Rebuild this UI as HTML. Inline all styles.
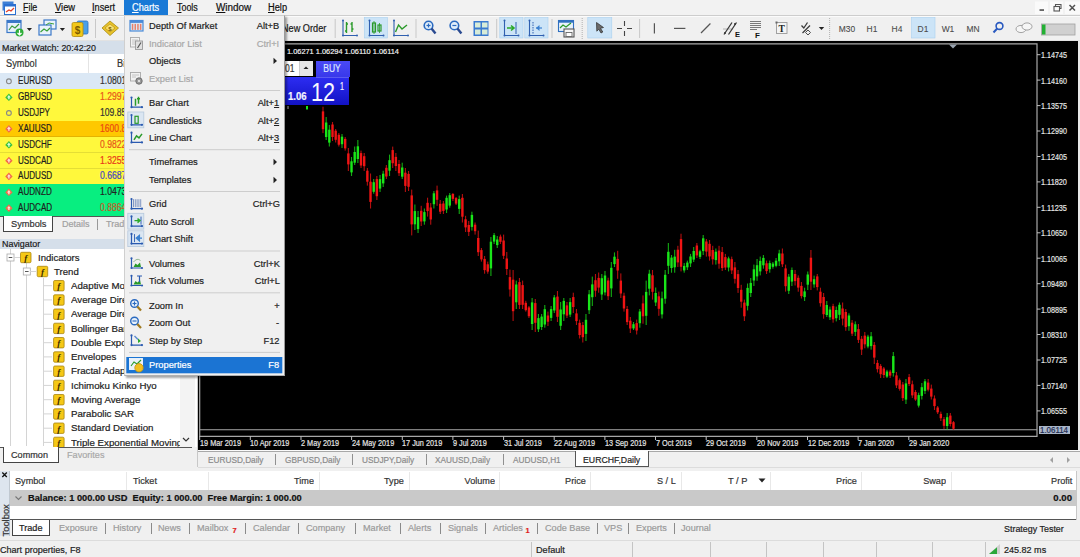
<!DOCTYPE html>
<html><head><meta charset="utf-8"><style>
html,body{margin:0;padding:0;width:1080px;height:557px;overflow:hidden;background:#f0f0f0}
.b{position:absolute}
.t{position:absolute;white-space:nowrap;font-family:'Liberation Sans',sans-serif;-webkit-text-stroke:0.2px currentColor}
u{text-decoration:underline;text-underline-offset:1px}
</style></head><body>
<div class="b" style="left:0px;top:0px;width:1080px;height:557px;background:#f0f0f0"></div><div class="b" style="left:0px;top:0px;width:1080px;height:15px;background:#f2f2f2"></div><svg class="b" style="left:2px;top:1px" width="14" height="14" viewBox="0 0 14 14"><rect x="0.5" y="0.5" width="11" height="9" fill="#3d7fd6"/><rect x="2.5" y="3.5" width="11" height="10" fill="#fff" stroke="#2a6fd0"/><rect x="2.5" y="3.5" width="11" height="2" fill="#2a6fd0"/><path d="M4 11 L7 9 L9 10 L12 7" stroke="#e0402a" stroke-width="1.3" fill="none"/></svg><div class="t" style="left:23.0px;top:2.0px;font-size:10px;line-height:12.0px;color:#111;font-weight:400;transform:scaleX(0.887);transform-origin:0 50%;"><u>F</u>ile</div><div class="t" style="left:54.6px;top:2.0px;font-size:10px;line-height:12.0px;color:#111;font-weight:400;transform:scaleX(0.935);transform-origin:0 50%;"><u>V</u>iew</div><div class="t" style="left:92.0px;top:2.0px;font-size:10px;line-height:12.0px;color:#111;font-weight:400;transform:scaleX(0.920);transform-origin:0 50%;"><u>I</u>nsert</div><div class="t" style="left:177.2px;top:2.0px;font-size:10px;line-height:12.0px;color:#111;font-weight:400;transform:scaleX(0.891);transform-origin:0 50%;"><u>T</u>ools</div><div class="t" style="left:215.8px;top:2.0px;font-size:10px;line-height:12.0px;color:#111;font-weight:400;transform:scaleX(0.990);transform-origin:0 50%;"><u>W</u>indow</div><div class="t" style="left:268.0px;top:2.0px;font-size:10px;line-height:12.0px;color:#111;font-weight:400;transform:scaleX(0.924);transform-origin:0 50%;"><u>H</u>elp</div><div class="b" style="left:123.9px;top:0px;width:44.1px;height:15px;background:#1979d6"></div><div class="t" style="left:132.4px;top:2.0px;font-size:10px;line-height:12.0px;color:#fff;font-weight:400;transform:scaleX(0.920);transform-origin:0 50%;"><u>C</u>harts</div><svg class="b" style="left:1030px;top:0px" width="50" height="15" viewBox="0 0 50 15"><rect x="5" y="1.5" width="13" height="12.5" fill="#fafafa"/><rect x="20" y="1.5" width="13" height="12.5" fill="#fafafa"/><rect x="35" y="1.5" width="15" height="12.5" fill="#fafafa"/><rect x="9.5" y="9.3" width="4.5" height="1.5" fill="#444"/><rect x="24" y="6.5" width="5.5" height="4.5" fill="none" stroke="#555" stroke-width="1.1"/><path d="M25.5 6 V4.5 H31 V8.5 H30" stroke="#555" stroke-width="1.1" fill="none"/><path d="M39.5 5 L45 10.5 M45 5 L39.5 10.5" stroke="#505050" stroke-width="1.5"/></svg><div class="b" style="left:0px;top:15px;width:1080px;height:1.2px;background:#cdcdcd"></div><div class="b" style="left:0px;top:16.2px;width:1080px;height:0.8px;background:#fbfbfb"></div><div class="b" style="left:0px;top:17px;width:1080px;height:24px;background:#f0f0f0"></div><div class="b" style="left:0px;top:40px;width:1080px;height:1px;background:#e2e2e2"></div><svg class="b" style="left:0;top:0" width="1080" height="45"><rect x="364.3" y="17.5" width="23.1" height="20.5" fill="#cce4f7" stroke="#a8d0f0" stroke-width="0.6"/><rect x="499.8" y="17.5" width="23.2" height="20.5" fill="#cce4f7" stroke="#a8d0f0" stroke-width="0.6"/><rect x="524.8" y="17.5" width="23.2" height="20.5" fill="#cce4f7" stroke="#a8d0f0" stroke-width="0.6"/><rect x="587.8" y="17.5" width="24.0" height="20.5" fill="#cce4f7" stroke="#a8d0f0" stroke-width="0.6"/><rect x="911.5" y="17.5" width="23.5" height="20.5" fill="#cce4f7" stroke="#a8d0f0" stroke-width="0.6"/><rect x="95.0" y="19" width="1" height="19" fill="#c8c8c8"/><rect x="334.7" y="19" width="1" height="19" fill="#c8c8c8"/><rect x="415.5" y="19" width="1" height="19" fill="#c8c8c8"/><rect x="496.2" y="19" width="1" height="19" fill="#c8c8c8"/><rect x="551.5" y="19" width="1" height="19" fill="#c8c8c8"/><rect x="639.1" y="19" width="1" height="19" fill="#c8c8c8"/><rect x="581.7" y="18" width="1" height="1" fill="#b0b0b0"/><rect x="581.7" y="20" width="1" height="1" fill="#b0b0b0"/><rect x="581.7" y="22" width="1" height="1" fill="#b0b0b0"/><rect x="581.7" y="24" width="1" height="1" fill="#b0b0b0"/><rect x="581.7" y="26" width="1" height="1" fill="#b0b0b0"/><rect x="581.7" y="28" width="1" height="1" fill="#b0b0b0"/><rect x="581.7" y="30" width="1" height="1" fill="#b0b0b0"/><rect x="581.7" y="32" width="1" height="1" fill="#b0b0b0"/><rect x="581.7" y="34" width="1" height="1" fill="#b0b0b0"/><rect x="581.7" y="36" width="1" height="1" fill="#b0b0b0"/><rect x="581.7" y="38" width="1" height="1" fill="#b0b0b0"/><rect x="829.1" y="18" width="1" height="1" fill="#b0b0b0"/><rect x="829.1" y="20" width="1" height="1" fill="#b0b0b0"/><rect x="829.1" y="22" width="1" height="1" fill="#b0b0b0"/><rect x="829.1" y="24" width="1" height="1" fill="#b0b0b0"/><rect x="829.1" y="26" width="1" height="1" fill="#b0b0b0"/><rect x="829.1" y="28" width="1" height="1" fill="#b0b0b0"/><rect x="829.1" y="30" width="1" height="1" fill="#b0b0b0"/><rect x="829.1" y="32" width="1" height="1" fill="#b0b0b0"/><rect x="829.1" y="34" width="1" height="1" fill="#b0b0b0"/><rect x="829.1" y="36" width="1" height="1" fill="#b0b0b0"/><rect x="829.1" y="38" width="1" height="1" fill="#b0b0b0"/><rect x="7" y="20.5" width="14" height="12" fill="#e8f0fa" stroke="#3b78c8" stroke-width="1.2"/><rect x="7" y="20.5" width="14" height="2.5" fill="#3b78c8"/><path d="M9 30 L12 26 L15 28 L19 24" stroke="#3a9a3a" stroke-width="1.2" fill="none"/><circle cx="19.5" cy="32.5" r="4" fill="#2fae3a"/><path d="M19.5 30 V35 M17.5 33 L19.5 35 L21.5 33" stroke="#fff" stroke-width="1.2" fill="none"/><path d="M26.8 28 L32 28 L29.4 31 Z" fill="#222"/><rect x="44" y="20" width="12" height="9" fill="#eaf2fb" stroke="#3b78c8" stroke-width="1.2"/><rect x="39" y="25" width="12" height="10" fill="#eaf2fb" stroke="#3b78c8" stroke-width="1.2"/><path d="M40.5 32 L44 29 L47 31 L50 28" stroke="#3aa03a" stroke-width="1.2" fill="none"/><path d="M46 25 L49 23 L54 24" stroke="#3aa03a" stroke-width="1" fill="none"/><path d="M59.8 28 L65 28 L62.4 31 Z" fill="#222"/><rect x="77" y="21" width="11" height="13" rx="1.5" fill="#4aa0e8" stroke="#2a70c0" stroke-width="0.8"/><rect x="72" y="22.5" width="11" height="14" rx="1.5" fill="#f2c81a" stroke="#b08a10" stroke-width="0.8"/><text x="77.5" y="34" font-size="10" font-weight="700" text-anchor="middle" fill="#7a5a00" font-family="Liberation Sans">$</text><path d="M102 28 L110 21 L118.5 28 L110 35.5 Z" fill="#e8c22a" stroke="#a88a10" stroke-width="0.8"/><path d="M105 28 L110 24 L115 28 L110 32 Z" fill="#f8e070" stroke="#b08a10" stroke-width="0.6"/><text x="110" y="31" font-size="6" font-weight="700" text-anchor="middle" fill="#7a5a00" font-family="Liberation Sans">$</text><path d="M343 20.5 V35.5 H357" stroke="#3060b0" stroke-width="1.1" fill="none"/><circle cx="343" cy="20.5" r="1" fill="#3060b0"/><circle cx="357" cy="35.5" r="1" fill="#3060b0"/><circle cx="343" cy="35.5" r="1" fill="#3060b0"/><path d="M346.5 22 V33 M345 31 H346.5 M346.5 24 H348 M352 22 V32 M350.5 24 H352 M352 29 H353.5" stroke="#2a9a2a" stroke-width="1.4" fill="none"/><path d="M369.5 20.5 V35.5 H383.5" stroke="#3060b0" stroke-width="1.1" fill="none"/><circle cx="369.5" cy="20.5" r="1" fill="#3060b0"/><circle cx="383.5" cy="35.5" r="1" fill="#3060b0"/><circle cx="369.5" cy="35.5" r="1" fill="#3060b0"/><rect x="372.5" y="23" width="3" height="9" fill="none" stroke="#2a9a2a" stroke-width="1.2"/><rect x="378" y="25" width="3" height="6" fill="none" stroke="#2a9a2a" stroke-width="1.2"/><path d="M374 21 V34 M379.5 23 V33" stroke="#2a9a2a" stroke-width="0.8"/><path d="M394 20.5 V35.5 H408" stroke="#3060b0" stroke-width="1.1" fill="none"/><circle cx="394" cy="20.5" r="1" fill="#3060b0"/><circle cx="408" cy="35.5" r="1" fill="#3060b0"/><circle cx="394" cy="35.5" r="1" fill="#3060b0"/><path d="M395.5 32 L398.5 25 L402 29 L407 25" stroke="#2a9a2a" stroke-width="1.4" fill="none"/><circle cx="428.5" cy="25.5" r="4.3" fill="#e0eefa" stroke="#2a6ac0" stroke-width="1.6"/><path d="M431.5 28.5 L435.5 33.5" stroke="#2a4a90" stroke-width="2.4"/><path d="M426.5 25.5 H430.5" stroke="#2a6ac0" stroke-width="1.2"/><path d="M428.5 23.5 V27.5" stroke="#2a6ac0" stroke-width="1.2"/><circle cx="454.4" cy="25.5" r="4.3" fill="#e0eefa" stroke="#2a6ac0" stroke-width="1.6"/><path d="M457.4 28.5 L461.4 33.5" stroke="#2a4a90" stroke-width="2.4"/><path d="M452.4 25.5 H456.4" stroke="#2a6ac0" stroke-width="1.2"/><rect x="473.5" y="21" width="15" height="15" fill="#3a7ad0"/><rect x="475" y="22.5" width="5.5" height="5" fill="#d8ecd8"/><rect x="482" y="22.5" width="5.5" height="5" fill="#d8ecd8"/><rect x="475" y="29.5" width="5.5" height="5" fill="#d8ecd8"/><rect x="482" y="29.5" width="5.5" height="5" fill="#d8ecd8"/><path d="M504.5 20.5 V35.5 H518.5" stroke="#3060b0" stroke-width="1.1" fill="none"/><circle cx="504.5" cy="20.5" r="1" fill="#3060b0"/><circle cx="518.5" cy="35.5" r="1" fill="#3060b0"/><circle cx="504.5" cy="35.5" r="1" fill="#3060b0"/><path d="M516 22 V34" stroke="#3060b0" stroke-width="1" /><path d="M507 28 H514 M511 25.5 L514 28 L511 30.5" stroke="#2aaa2a" stroke-width="1.6" fill="none"/><path d="M529.5 20.5 V35.5 H543.5" stroke="#3060b0" stroke-width="1.1" fill="none"/><circle cx="529.5" cy="20.5" r="1" fill="#3060b0"/><circle cx="543.5" cy="35.5" r="1" fill="#3060b0"/><circle cx="529.5" cy="35.5" r="1" fill="#3060b0"/><path d="M533 22 V34" stroke="#3060b0" stroke-width="1" stroke-dasharray="1.5 1"/><path d="M536 28 H542" stroke="#3a80d0" stroke-width="1.2"/><path d="M536 28 L539.5 25 V31 Z" fill="#3a80d0"/><rect x="558.5" y="20.5" width="15" height="11" fill="#e8f2fb" stroke="#3070c0" stroke-width="1.1"/><rect x="558.5" y="20.5" width="15" height="2.2" fill="#3070c0"/><path d="M560 28 L563 25 L566 27 L571 23" stroke="#2a9a2a" stroke-width="1.2" fill="none"/><rect x="564" y="29" width="10" height="8" fill="#f6f6f6" stroke="#555" stroke-width="1.1"/><rect x="566" y="32.5" width="6" height="4" fill="#fff" stroke="#555" stroke-width="0.8"/><path d="M596.5 22.5 L603.5 27.5 L600.5 28.3 L602.8 32 L601 33 L598.8 29.3 L596.8 31.2 Z" fill="#6a6a6a" stroke="#2a2a2a" stroke-width="0.7"/><path d="M617 28.5 H622 M627 28.5 H632 M624.5 21 V26 M624.5 31 V36" stroke="#444" stroke-width="1.1"/><path d="M654.4 23.3 V33.4" stroke="#555" stroke-width="1.2"/><path d="M674 28.4 H685.4" stroke="#555" stroke-width="1.2"/><path d="M701 33 L710.4 23.5" stroke="#555" stroke-width="1.2"/><path d="M724 34.5 L732 22.5 M728.5 34.5 L736.5 22.5" stroke="#3a3a3a" stroke-width="1.3" fill="none"/><path d="M723.5 29 L733 29" stroke="#555" stroke-width="0.8" stroke-dasharray="1 1"/><circle cx="725" cy="33" r="1" fill="#333"/><circle cx="735" cy="24" r="1" fill="#333"/><text x="737.5" y="37" font-size="7.5" font-weight="700" fill="#111" font-family="Liberation Sans" text-anchor="middle">E</text><path d="M750 21.5 H761 M750 23.5 H761 M750 25.5 H761 M750 27.5 H761 M750 29.5 H757" stroke="#6a6a6a" stroke-width="0.9"/><text x="757.5" y="37.5" font-size="8" font-weight="700" fill="#111" font-family="Liberation Sans" text-anchor="middle">F</text><rect x="776.5" y="22.5" width="10.5" height="11" fill="#f4f4f4" stroke="#999" stroke-width="0.9"/><rect x="775.5" y="21.5" width="2" height="2" fill="#666"/><text x="781.7" y="32" font-size="9.5" font-weight="700" fill="#222" font-family="Liberation Serif" text-anchor="middle">T</text><path d="M801.5 25.5 L803.8 28 L807.5 22.5" stroke="#3a3a3a" stroke-width="1.3" fill="none"/><path d="M802.5 33 L810 25.5" stroke="#3a3a3a" stroke-width="1.2"/><path d="M808 30 L810.5 32.5 L808 35 L805.5 32.5 Z" fill="none" stroke="#3a3a3a" stroke-width="0.9"/><path d="M818.8 27 L824.2 27 L821.5 30 Z" fill="#222"/><circle cx="999.5" cy="26" r="3.4" fill="none" stroke="#2a5ac0" stroke-width="1.6"/><path d="M997.2 28.5 L993.5 32.5" stroke="#2a5ac0" stroke-width="2"/><ellipse cx="1021" cy="29" rx="5" ry="3.6" fill="#f6f6f6" stroke="#999" stroke-width="0.9"/><ellipse cx="1027" cy="26.5" rx="5" ry="3.6" fill="#f6f6f6" stroke="#999" stroke-width="0.9"/><rect x="1041.5" y="24" width="33.5" height="11" fill="#d0d0d0" stroke="#a0a0a0" stroke-width="0.8"/><rect x="1042" y="24.5" width="3.5" height="10" fill="#22b033"/></svg><div class="t" style="left:796.5px;width:100px;text-align:center;top:22.9px;font-size:9.8px;line-height:11.8px;color:#4a4a4a;font-weight:400;transform:scaleX(0.860);transform-origin:50% 50%;-webkit-text-stroke:0.1px currentColor">M30</div><div class="t" style="left:822.0px;width:100px;text-align:center;top:22.9px;font-size:9.8px;line-height:11.8px;color:#4a4a4a;font-weight:400;transform:scaleX(0.860);transform-origin:50% 50%;-webkit-text-stroke:0.1px currentColor">H1</div><div class="t" style="left:846.7px;width:100px;text-align:center;top:22.9px;font-size:9.8px;line-height:11.8px;color:#4a4a4a;font-weight:400;transform:scaleX(0.860);transform-origin:50% 50%;-webkit-text-stroke:0.1px currentColor">H4</div><div class="t" style="left:873.0px;width:100px;text-align:center;top:22.9px;font-size:9.8px;line-height:11.8px;color:#4a4a4a;font-weight:400;transform:scaleX(0.860);transform-origin:50% 50%;-webkit-text-stroke:0.1px currentColor">D1</div><div class="t" style="left:897.6px;width:100px;text-align:center;top:22.9px;font-size:9.8px;line-height:11.8px;color:#4a4a4a;font-weight:400;transform:scaleX(0.860);transform-origin:50% 50%;-webkit-text-stroke:0.1px currentColor">W1</div><div class="t" style="left:923.0px;width:100px;text-align:center;top:22.9px;font-size:9.8px;line-height:11.8px;color:#4a4a4a;font-weight:400;transform:scaleX(0.860);transform-origin:50% 50%;-webkit-text-stroke:0.1px currentColor">MN</div><div class="t" style="left:282.0px;top:22.8px;font-size:10px;line-height:12.0px;color:#1a1a1a;font-weight:400;transform:scaleX(0.916);transform-origin:0 50%;">New Order</div><div class="b" style="left:0px;top:41px;width:197px;height:13px;background:#d5dfea"></div><div class="t" style="left:2.0px;top:41.8px;font-size:9.6px;line-height:11.5px;color:#1a1a1a;font-weight:400;transform:scaleX(0.926);transform-origin:0 50%;">Market Watch: 20:42:20</div><div class="b" style="left:0px;top:54px;width:197px;height:19.4px;background:#fff"></div><div class="b" style="left:88.3px;top:54px;width:1px;height:162px;background:#e4e4e4"></div><div class="t" style="left:5.5px;top:57.8px;font-size:10px;line-height:12.0px;color:#333;font-weight:400;transform:scaleX(0.920);transform-origin:0 50%;">Symbol</div><div class="t" style="left:117.0px;top:57.8px;font-size:10px;line-height:12.0px;color:#333;font-weight:400;transform:scaleX(0.920);transform-origin:0 50%;">Bid</div><div class="b" style="left:0px;top:73.4px;width:197px;height:15.85px;background:#dbe8f5"></div><div class="b" style="left:0px;top:88.8px;width:197px;height:0.5px;background:rgba(0,0,0,0.10)"></div><div class="t" style="left:17.5px;top:75.3px;font-size:10px;line-height:12.0px;color:#1e1e1e;font-weight:400;transform:scaleX(0.810);transform-origin:0 50%;">EURUSD</div><div class="t" style="left:100.0px;top:75.3px;font-size:10px;line-height:12.0px;color:#333;font-weight:400;transform:scaleX(0.860);transform-origin:0 50%;">1.08017</div><div class="b" style="left:0px;top:89.2px;width:197px;height:15.85px;background:#fff83c"></div><div class="b" style="left:0px;top:104.6px;width:197px;height:0.5px;background:rgba(0,0,0,0.10)"></div><div class="t" style="left:17.5px;top:91.2px;font-size:10px;line-height:12.0px;color:#1e1e1e;font-weight:400;transform:scaleX(0.810);transform-origin:0 50%;">GBPUSD</div><div class="t" style="left:100.0px;top:91.2px;font-size:10px;line-height:12.0px;color:#e8541a;font-weight:400;transform:scaleX(0.860);transform-origin:0 50%;">1.29972</div><div class="b" style="left:0px;top:105.1px;width:197px;height:15.85px;background:#fff83c"></div><div class="b" style="left:0px;top:120.5px;width:197px;height:0.5px;background:rgba(0,0,0,0.10)"></div><div class="t" style="left:17.5px;top:107.0px;font-size:10px;line-height:12.0px;color:#1e1e1e;font-weight:400;transform:scaleX(0.810);transform-origin:0 50%;">USDJPY</div><div class="t" style="left:100.0px;top:107.0px;font-size:10px;line-height:12.0px;color:#333;font-weight:400;transform:scaleX(0.860);transform-origin:0 50%;">109.853</div><div class="b" style="left:0px;top:121.0px;width:197px;height:15.85px;background:#fec800"></div><div class="b" style="left:0px;top:136.3px;width:197px;height:0.5px;background:rgba(0,0,0,0.10)"></div><div class="t" style="left:17.5px;top:122.8px;font-size:10px;line-height:12.0px;color:#1e1e1e;font-weight:400;transform:scaleX(0.810);transform-origin:0 50%;">XAUUSD</div><div class="t" style="left:100.0px;top:122.8px;font-size:10px;line-height:12.0px;color:#ec4a10;font-weight:400;transform:scaleX(0.860);transform-origin:0 50%;">1600.85</div><div class="b" style="left:0px;top:136.8px;width:197px;height:15.85px;background:#fff83c"></div><div class="b" style="left:0px;top:152.2px;width:197px;height:0.5px;background:rgba(0,0,0,0.10)"></div><div class="t" style="left:17.5px;top:138.7px;font-size:10px;line-height:12.0px;color:#1e1e1e;font-weight:400;transform:scaleX(0.810);transform-origin:0 50%;">USDCHF</div><div class="t" style="left:100.0px;top:138.7px;font-size:10px;line-height:12.0px;color:#e8541a;font-weight:400;transform:scaleX(0.860);transform-origin:0 50%;">0.98227</div><div class="b" style="left:0px;top:152.7px;width:197px;height:15.85px;background:#fff83c"></div><div class="b" style="left:0px;top:168.0px;width:197px;height:0.5px;background:rgba(0,0,0,0.10)"></div><div class="t" style="left:17.5px;top:154.6px;font-size:10px;line-height:12.0px;color:#1e1e1e;font-weight:400;transform:scaleX(0.810);transform-origin:0 50%;">USDCAD</div><div class="t" style="left:100.0px;top:154.6px;font-size:10px;line-height:12.0px;color:#e83a1a;font-weight:400;transform:scaleX(0.860);transform-origin:0 50%;">1.32559</div><div class="b" style="left:0px;top:168.5px;width:197px;height:15.85px;background:#fff83c"></div><div class="b" style="left:0px;top:183.8px;width:197px;height:0.5px;background:rgba(0,0,0,0.10)"></div><div class="t" style="left:17.5px;top:170.4px;font-size:10px;line-height:12.0px;color:#1e1e1e;font-weight:400;transform:scaleX(0.810);transform-origin:0 50%;">AUDUSD</div><div class="t" style="left:100.0px;top:170.4px;font-size:10px;line-height:12.0px;color:#4646c0;font-weight:400;transform:scaleX(0.860);transform-origin:0 50%;">0.66871</div><div class="b" style="left:0px;top:184.4px;width:197px;height:15.85px;background:#08ee80"></div><div class="b" style="left:0px;top:199.7px;width:197px;height:0.5px;background:rgba(0,0,0,0.10)"></div><div class="t" style="left:17.5px;top:186.3px;font-size:10px;line-height:12.0px;color:#1e1e1e;font-weight:400;transform:scaleX(0.810);transform-origin:0 50%;">AUDNZD</div><div class="t" style="left:100.0px;top:186.3px;font-size:10px;line-height:12.0px;color:#222;font-weight:400;transform:scaleX(0.860);transform-origin:0 50%;">1.04733</div><div class="b" style="left:0px;top:200.2px;width:197px;height:15.85px;background:#08ee80"></div><div class="b" style="left:0px;top:215.5px;width:197px;height:0.5px;background:rgba(0,0,0,0.10)"></div><div class="t" style="left:17.5px;top:202.1px;font-size:10px;line-height:12.0px;color:#1e1e1e;font-weight:400;transform:scaleX(0.810);transform-origin:0 50%;">AUDCAD</div><div class="t" style="left:100.0px;top:202.1px;font-size:10px;line-height:12.0px;color:#c85a2a;font-weight:400;transform:scaleX(0.860);transform-origin:0 50%;">0.88645</div><svg class="b" style="left:0;top:0" width="20" height="220"><circle cx="8.9" cy="81.3" r="2.4" fill="none" stroke="#888" stroke-width="1.1"/><path d="M8.9 93.4 L12.6 97.4 L8.9 101.0 L5.2 97.4 Z" fill="#3cc040"/><path d="M8.9 95.0 L10.8 97.4 L9.6 97.4 V99.2 H8.2 V97.4 H7 Z" fill="#d8ffd8"/><circle cx="8.9" cy="113.0" r="2.4" fill="none" stroke="#888" stroke-width="1.1"/><path d="M8.9 125.0 L12.6 129.0 L8.9 132.7 L5.2 129.0 Z" fill="#f26a4a"/><path d="M8.9 126.6 L10.8 129.0 L9.6 129.0 V130.8 H8.2 V129.0 H7 Z" fill="#ffe0d8"/><path d="M8.9 140.9 L12.6 144.9 L8.9 148.5 L5.2 144.9 Z" fill="#3cc040"/><path d="M8.9 142.5 L10.8 144.9 L9.6 144.9 V146.7 H8.2 V144.9 H7 Z" fill="#d8ffd8"/><path d="M8.9 156.8 L12.6 160.8 L8.9 164.4 L5.2 160.8 Z" fill="#f26a4a"/><path d="M8.9 158.4 L10.8 160.8 L9.6 160.8 V162.6 H8.2 V160.8 H7 Z" fill="#ffe0d8"/><path d="M8.9 172.6 L12.6 176.6 L8.9 180.2 L5.2 176.6 Z" fill="#f26a4a"/><path d="M8.9 174.2 L10.8 176.6 L9.6 176.6 V178.4 H8.2 V176.6 H7 Z" fill="#ffe0d8"/><path d="M8.9 188.5 L12.6 192.5 L8.9 196.1 L5.2 192.5 Z" fill="#f26a4a"/><path d="M8.9 190.1 L10.8 192.5 L9.6 192.5 V194.3 H8.2 V192.5 H7 Z" fill="#ffe0d8"/><path d="M8.9 204.3 L12.6 208.3 L8.9 211.9 L5.2 208.3 Z" fill="#f26a4a"/><path d="M8.9 205.9 L10.8 208.3 L9.6 208.3 V210.1 H8.2 V208.3 H7 Z" fill="#ffe0d8"/></svg><div class="b" style="left:0px;top:215.5px;width:197px;height:17.5px;background:#f0f0f0"></div><div class="b" style="left:0px;top:215.5px;width:197px;height:0.8px;background:#555"></div><div class="b" style="left:2.5px;top:216.3px;width:50.8px;height:16px;background:#fff;border:1px solid #444;border-top:none;box-sizing:border-box"></div><div class="t" style="left:10.5px;top:218.4px;font-size:9.8px;line-height:11.8px;color:#333;font-weight:400;transform:scaleX(0.945);transform-origin:0 50%;">Symbols</div><div class="t" style="left:62.0px;top:218.4px;font-size:9.8px;line-height:11.8px;color:#a0a0a0;font-weight:400;transform:scaleX(0.921);transform-origin:0 50%;">Details</div><div class="b" style="left:97.2px;top:218.5px;width:1px;height:11px;background:#999"></div><div class="t" style="left:105.8px;top:218.4px;font-size:9.8px;line-height:11.8px;color:#a0a0a0;font-weight:400;transform:scaleX(0.930);transform-origin:0 50%;">Trading</div><div class="b" style="left:0px;top:233px;width:197px;height:6px;background:#f0f0f0"></div><div class="b" style="left:0px;top:238.8px;width:197px;height:10.2px;background:#d5dfea"></div><div class="t" style="left:2.0px;top:238.2px;font-size:9.6px;line-height:11.5px;color:#1a1a1a;font-weight:400;transform:scaleX(0.930);transform-origin:0 50%;">Navigator</div><div class="b" style="left:0px;top:249px;width:197px;height:197.5px;background:#fff"></div><div class="b" style="left:180px;top:249px;width:15px;height:197.5px;background:#f3f3f3"></div><div class="t" style="left:37.7px;top:251.6px;font-size:9.8px;line-height:11.8px;color:#222;font-weight:400;transform:scaleX(0.979);transform-origin:0 50%;">Indicators</div><div class="t" style="left:53.8px;top:265.6px;font-size:9.8px;line-height:11.8px;color:#222;font-weight:400;transform:scaleX(0.980);transform-origin:0 50%;">Trend</div><div class="t" style="left:71.0px;top:279.8px;font-size:9.8px;line-height:11.8px;color:#222;font-weight:400;transform:scaleX(0.990);transform-origin:0 50%;width:110px;overflow:hidden">Adaptive Moving Average</div><div class="t" style="left:71.0px;top:294.1px;font-size:9.8px;line-height:11.8px;color:#222;font-weight:400;transform:scaleX(0.990);transform-origin:0 50%;width:110px;overflow:hidden">Average Directional Movement Index</div><div class="t" style="left:71.0px;top:308.3px;font-size:9.8px;line-height:11.8px;color:#222;font-weight:400;transform:scaleX(0.990);transform-origin:0 50%;width:110px;overflow:hidden">Average Directional Movement Index Wilder</div><div class="t" style="left:71.0px;top:322.6px;font-size:9.8px;line-height:11.8px;color:#222;font-weight:400;transform:scaleX(0.990);transform-origin:0 50%;width:110px;overflow:hidden">Bollinger Bands</div><div class="t" style="left:71.0px;top:336.8px;font-size:9.8px;line-height:11.8px;color:#222;font-weight:400;transform:scaleX(0.990);transform-origin:0 50%;width:110px;overflow:hidden">Double Exponential Moving Average</div><div class="t" style="left:71.0px;top:351.1px;font-size:9.8px;line-height:11.8px;color:#222;font-weight:400;transform:scaleX(0.990);transform-origin:0 50%;width:110px;overflow:hidden">Envelopes</div><div class="t" style="left:71.0px;top:365.3px;font-size:9.8px;line-height:11.8px;color:#222;font-weight:400;transform:scaleX(0.990);transform-origin:0 50%;width:110px;overflow:hidden">Fractal Adaptive Moving Average</div><div class="t" style="left:71.0px;top:379.6px;font-size:9.8px;line-height:11.8px;color:#222;font-weight:400;transform:scaleX(0.990);transform-origin:0 50%;width:110px;overflow:hidden">Ichimoku Kinko Hyo</div><div class="t" style="left:71.0px;top:393.8px;font-size:9.8px;line-height:11.8px;color:#222;font-weight:400;transform:scaleX(0.990);transform-origin:0 50%;width:110px;overflow:hidden">Moving Average</div><div class="t" style="left:71.0px;top:408.1px;font-size:9.8px;line-height:11.8px;color:#222;font-weight:400;transform:scaleX(0.990);transform-origin:0 50%;width:110px;overflow:hidden">Parabolic SAR</div><div class="t" style="left:71.0px;top:422.3px;font-size:9.8px;line-height:11.8px;color:#222;font-weight:400;transform:scaleX(0.990);transform-origin:0 50%;width:110px;overflow:hidden">Standard Deviation</div><div class="t" style="left:71.0px;top:436.6px;font-size:9.8px;line-height:11.8px;color:#222;font-weight:400;transform:scaleX(0.990);transform-origin:0 50%;width:110px;overflow:hidden">Triple Exponential Moving Average</div><svg class="b" style="left:0;top:0" width="200" height="460"><path d="M10.5 249 V446 M26.5 262 V446 M43.5 278 V446" stroke="#d4d4d4" stroke-width="1" fill="none"/><rect x="7.0" y="254.0" width="7" height="7" fill="#fff" stroke="#aaa" stroke-width="0.8"/><path d="M8.7 257.5 H12.3" stroke="#444" stroke-width="0.9"/><path d="M14 257.5 H20" stroke="#d4d4d4" stroke-width="1"/><rect x="20.5" y="252.3" width="10.5" height="10.4" rx="1.2" fill="#f5c816" stroke="#a88410" stroke-width="0.8"/><text x="25.7" y="260.8" font-size="9" font-style="italic" font-weight="700" fill="#3a2a00" text-anchor="middle" font-family="Liberation Serif">f</text><rect x="23.3" y="268.0" width="7" height="7" fill="#fff" stroke="#aaa" stroke-width="0.8"/><path d="M25.0 271.5 H28.6" stroke="#444" stroke-width="0.9"/><path d="M30 271.5 H36" stroke="#d4d4d4" stroke-width="1"/><rect x="37.2" y="266.3" width="10.5" height="10.4" rx="1.2" fill="#f5c816" stroke="#a88410" stroke-width="0.8"/><text x="42.400000000000006" y="274.8" font-size="9" font-style="italic" font-weight="700" fill="#3a2a00" text-anchor="middle" font-family="Liberation Serif">f</text><path d="M44 285.7 H52" stroke="#d4d4d4" stroke-width="1"/><rect x="53.6" y="280.5" width="10.5" height="10.4" rx="1.2" fill="#f5c816" stroke="#a88410" stroke-width="0.8"/><text x="58.800000000000004" y="289.0" font-size="9" font-style="italic" font-weight="700" fill="#3a2a00" text-anchor="middle" font-family="Liberation Serif">f</text><path d="M44 299.9 H52" stroke="#d4d4d4" stroke-width="1"/><rect x="53.6" y="294.8" width="10.5" height="10.4" rx="1.2" fill="#f5c816" stroke="#a88410" stroke-width="0.8"/><text x="58.800000000000004" y="303.2" font-size="9" font-style="italic" font-weight="700" fill="#3a2a00" text-anchor="middle" font-family="Liberation Serif">f</text><path d="M44 314.2 H52" stroke="#d4d4d4" stroke-width="1"/><rect x="53.6" y="309.0" width="10.5" height="10.4" rx="1.2" fill="#f5c816" stroke="#a88410" stroke-width="0.8"/><text x="58.800000000000004" y="317.5" font-size="9" font-style="italic" font-weight="700" fill="#3a2a00" text-anchor="middle" font-family="Liberation Serif">f</text><path d="M44 328.4 H52" stroke="#d4d4d4" stroke-width="1"/><rect x="53.6" y="323.2" width="10.5" height="10.4" rx="1.2" fill="#f5c816" stroke="#a88410" stroke-width="0.8"/><text x="58.800000000000004" y="331.8" font-size="9" font-style="italic" font-weight="700" fill="#3a2a00" text-anchor="middle" font-family="Liberation Serif">f</text><path d="M44 342.7 H52" stroke="#d4d4d4" stroke-width="1"/><rect x="53.6" y="337.5" width="10.5" height="10.4" rx="1.2" fill="#f5c816" stroke="#a88410" stroke-width="0.8"/><text x="58.800000000000004" y="346.0" font-size="9" font-style="italic" font-weight="700" fill="#3a2a00" text-anchor="middle" font-family="Liberation Serif">f</text><path d="M44 356.9 H52" stroke="#d4d4d4" stroke-width="1"/><rect x="53.6" y="351.8" width="10.5" height="10.4" rx="1.2" fill="#f5c816" stroke="#a88410" stroke-width="0.8"/><text x="58.800000000000004" y="360.2" font-size="9" font-style="italic" font-weight="700" fill="#3a2a00" text-anchor="middle" font-family="Liberation Serif">f</text><path d="M44 371.2 H52" stroke="#d4d4d4" stroke-width="1"/><rect x="53.6" y="366.0" width="10.5" height="10.4" rx="1.2" fill="#f5c816" stroke="#a88410" stroke-width="0.8"/><text x="58.800000000000004" y="374.5" font-size="9" font-style="italic" font-weight="700" fill="#3a2a00" text-anchor="middle" font-family="Liberation Serif">f</text><path d="M44 385.4 H52" stroke="#d4d4d4" stroke-width="1"/><rect x="53.6" y="380.2" width="10.5" height="10.4" rx="1.2" fill="#f5c816" stroke="#a88410" stroke-width="0.8"/><text x="58.800000000000004" y="388.8" font-size="9" font-style="italic" font-weight="700" fill="#3a2a00" text-anchor="middle" font-family="Liberation Serif">f</text><path d="M44 399.7 H52" stroke="#d4d4d4" stroke-width="1"/><rect x="53.6" y="394.5" width="10.5" height="10.4" rx="1.2" fill="#f5c816" stroke="#a88410" stroke-width="0.8"/><text x="58.800000000000004" y="403.0" font-size="9" font-style="italic" font-weight="700" fill="#3a2a00" text-anchor="middle" font-family="Liberation Serif">f</text><path d="M44 413.9 H52" stroke="#d4d4d4" stroke-width="1"/><rect x="53.6" y="408.8" width="10.5" height="10.4" rx="1.2" fill="#f5c816" stroke="#a88410" stroke-width="0.8"/><text x="58.800000000000004" y="417.2" font-size="9" font-style="italic" font-weight="700" fill="#3a2a00" text-anchor="middle" font-family="Liberation Serif">f</text><path d="M44 428.2 H52" stroke="#d4d4d4" stroke-width="1"/><rect x="53.6" y="423.0" width="10.5" height="10.4" rx="1.2" fill="#f5c816" stroke="#a88410" stroke-width="0.8"/><text x="58.800000000000004" y="431.5" font-size="9" font-style="italic" font-weight="700" fill="#3a2a00" text-anchor="middle" font-family="Liberation Serif">f</text><path d="M44 442.4 H52" stroke="#d4d4d4" stroke-width="1"/><rect x="53.6" y="437.2" width="10.5" height="10.4" rx="1.2" fill="#f5c816" stroke="#a88410" stroke-width="0.8"/><text x="58.800000000000004" y="445.8" font-size="9" font-style="italic" font-weight="700" fill="#3a2a00" text-anchor="middle" font-family="Liberation Serif">f</text></svg><svg class="b" style="left:181px;top:436px" width="10" height="8"><path d="M2 2 L5 5 L8 2" stroke="#333" stroke-width="1.2" fill="none"/></svg><div class="b" style="left:0px;top:446.5px;width:192px;height:1px;background:#555"></div><div class="b" style="left:0px;top:447px;width:197px;height:16px;background:#f0f0f0"></div><div class="b" style="left:0px;top:446.5px;width:192px;height:1px;background:#555"></div><div class="b" style="left:2.5px;top:446.5px;width:56px;height:16px;background:#fff;border:1px solid #444;border-top:none;box-sizing:border-box"></div><div class="t" style="left:10.5px;top:448.9px;font-size:9.8px;line-height:11.8px;color:#333;font-weight:400;transform:scaleX(0.930);transform-origin:0 50%;">Common</div><div class="t" style="left:66.5px;top:448.9px;font-size:9.8px;line-height:11.8px;color:#a8a8a8;font-weight:400;transform:scaleX(0.930);transform-origin:0 50%;">Favorites</div><div class="b" style="left:196.7px;top:41px;width:1.3px;height:426px;background:#c8c8c8"></div><div class="b" style="left:197.5px;top:41px;width:880.5px;height:409px;background:#000"></div><div class="b" style="left:1078px;top:41px;width:2px;height:426px;background:#e8e8e8"></div><svg class="b" style="left:0;top:0" width="1080" height="452"><path d="M199.7 436.3 V43.9 H1037 V436.3 Z" stroke="#a8a8a8" stroke-width="1.2" fill="none"/><path d="M199.7 429.8 H1037" stroke="#a8a8a8" stroke-width="1.1"/><path d="M949 44.5 L957 44.5 L953 48.5 Z" fill="#9aa4b0"/><path d="M1037 54.7 H1040.5" stroke="#c0c0c0" stroke-width="1"/><path d="M1037 80.1 H1040.5" stroke="#c0c0c0" stroke-width="1"/><path d="M1037 105.6 H1040.5" stroke="#c0c0c0" stroke-width="1"/><path d="M1037 131.0 H1040.5" stroke="#c0c0c0" stroke-width="1"/><path d="M1037 156.5 H1040.5" stroke="#c0c0c0" stroke-width="1"/><path d="M1037 181.9 H1040.5" stroke="#c0c0c0" stroke-width="1"/><path d="M1037 207.3 H1040.5" stroke="#c0c0c0" stroke-width="1"/><path d="M1037 232.8 H1040.5" stroke="#c0c0c0" stroke-width="1"/><path d="M1037 258.2 H1040.5" stroke="#c0c0c0" stroke-width="1"/><path d="M1037 283.7 H1040.5" stroke="#c0c0c0" stroke-width="1"/><path d="M1037 309.1 H1040.5" stroke="#c0c0c0" stroke-width="1"/><path d="M1037 334.5 H1040.5" stroke="#c0c0c0" stroke-width="1"/><path d="M1037 360.0 H1040.5" stroke="#c0c0c0" stroke-width="1"/><path d="M1037 385.4 H1040.5" stroke="#c0c0c0" stroke-width="1"/><path d="M1037 410.9 H1040.5" stroke="#c0c0c0" stroke-width="1"/><path d="M199.7 436.3 V440" stroke="#c0c0c0" stroke-width="1"/><path d="M250.3 436.3 V440" stroke="#c0c0c0" stroke-width="1"/><path d="M301.0 436.3 V440" stroke="#c0c0c0" stroke-width="1"/><path d="M351.6 436.3 V440" stroke="#c0c0c0" stroke-width="1"/><path d="M402.3 436.3 V440" stroke="#c0c0c0" stroke-width="1"/><path d="M452.9 436.3 V440" stroke="#c0c0c0" stroke-width="1"/><path d="M503.6 436.3 V440" stroke="#c0c0c0" stroke-width="1"/><path d="M554.2 436.3 V440" stroke="#c0c0c0" stroke-width="1"/><path d="M604.9 436.3 V440" stroke="#c0c0c0" stroke-width="1"/><path d="M655.5 436.3 V440" stroke="#c0c0c0" stroke-width="1"/><path d="M706.2 436.3 V440" stroke="#c0c0c0" stroke-width="1"/><path d="M756.8 436.3 V440" stroke="#c0c0c0" stroke-width="1"/><path d="M807.5 436.3 V440" stroke="#c0c0c0" stroke-width="1"/><path d="M858.1 436.3 V440" stroke="#c0c0c0" stroke-width="1"/><path d="M908.8 436.3 V440" stroke="#c0c0c0" stroke-width="1"/><rect x="322.45" y="106.7" width="1.1" height="26.4" fill="#f01414" opacity="0.75"/><rect x="321.80" y="111.4" width="2.4" height="17.8" fill="#f01414"/><rect x="325.62" y="117.0" width="1.1" height="23.0" fill="#19e619" opacity="0.75"/><rect x="324.97" y="122.5" width="2.4" height="14.5" fill="#19e619"/><rect x="328.79" y="125.0" width="1.1" height="21.5" fill="#19e619" opacity="0.75"/><rect x="328.14" y="129.7" width="2.4" height="12.9" fill="#19e619"/><rect x="331.96" y="122.0" width="1.1" height="19.0" fill="#f01414" opacity="0.75"/><rect x="331.31" y="124.5" width="2.4" height="12.5" fill="#f01414"/><rect x="335.12" y="129.0" width="1.1" height="13.5" fill="#f01414" opacity="0.75"/><rect x="334.47" y="130.7" width="2.4" height="9.1" fill="#f01414"/><rect x="338.29" y="133.0" width="1.1" height="13.5" fill="#f01414" opacity="0.75"/><rect x="337.64" y="134.8" width="2.4" height="9.9" fill="#f01414"/><rect x="341.46" y="134.0" width="1.1" height="14.0" fill="#19e619" opacity="0.75"/><rect x="340.81" y="136.7" width="2.4" height="7.5" fill="#19e619"/><rect x="344.63" y="137.0" width="1.1" height="13.6" fill="#f01414" opacity="0.75"/><rect x="343.98" y="138.9" width="2.4" height="9.5" fill="#f01414"/><rect x="347.80" y="148.0" width="1.1" height="23.0" fill="#f01414" opacity="0.75"/><rect x="347.15" y="153.4" width="2.4" height="11.0" fill="#f01414"/><rect x="350.97" y="157.0" width="1.1" height="19.0" fill="#19e619" opacity="0.75"/><rect x="350.32" y="161.3" width="2.4" height="11.1" fill="#19e619"/><rect x="354.13" y="146.5" width="1.1" height="18.5" fill="#19e619" opacity="0.75"/><rect x="353.48" y="152.0" width="2.4" height="10.7" fill="#19e619"/><rect x="357.30" y="140.0" width="1.1" height="23.0" fill="#19e619" opacity="0.75"/><rect x="356.65" y="146.3" width="2.4" height="12.7" fill="#19e619"/><rect x="360.47" y="150.6" width="1.1" height="17.4" fill="#f01414" opacity="0.75"/><rect x="359.82" y="153.1" width="2.4" height="12.4" fill="#f01414"/><rect x="363.64" y="153.0" width="1.1" height="18.0" fill="#f01414" opacity="0.75"/><rect x="362.99" y="156.2" width="2.4" height="10.0" fill="#f01414"/><rect x="366.81" y="168.0" width="1.1" height="17.6" fill="#f01414" opacity="0.75"/><rect x="366.16" y="170.7" width="2.4" height="11.0" fill="#f01414"/><rect x="369.98" y="173.5" width="1.1" height="35.0" fill="#f01414" opacity="0.75"/><rect x="369.33" y="181.7" width="2.4" height="20.2" fill="#f01414"/><rect x="373.14" y="179.0" width="1.1" height="14.7" fill="#19e619" opacity="0.75"/><rect x="372.49" y="182.2" width="2.4" height="9.6" fill="#19e619"/><rect x="376.31" y="176.0" width="1.1" height="24.0" fill="#f01414" opacity="0.75"/><rect x="375.66" y="179.1" width="2.4" height="17.1" fill="#f01414"/><rect x="379.48" y="175.0" width="1.1" height="17.0" fill="#19e619" opacity="0.75"/><rect x="378.83" y="179.1" width="2.4" height="9.5" fill="#19e619"/><rect x="382.65" y="170.8" width="1.1" height="16.2" fill="#19e619" opacity="0.75"/><rect x="382.00" y="173.7" width="2.4" height="9.7" fill="#19e619"/><rect x="385.82" y="165.0" width="1.1" height="14.0" fill="#f01414" opacity="0.75"/><rect x="385.17" y="167.8" width="2.4" height="8.7" fill="#f01414"/><rect x="388.99" y="154.6" width="1.1" height="21.4" fill="#19e619" opacity="0.75"/><rect x="388.34" y="160.2" width="2.4" height="10.5" fill="#19e619"/><rect x="392.15" y="146.6" width="1.1" height="21.4" fill="#f01414" opacity="0.75"/><rect x="391.50" y="150.1" width="2.4" height="13.1" fill="#f01414"/><rect x="395.32" y="153.0" width="1.1" height="18.0" fill="#f01414" opacity="0.75"/><rect x="394.67" y="156.9" width="2.4" height="9.1" fill="#f01414"/><rect x="398.49" y="160.0" width="1.1" height="16.0" fill="#f01414" opacity="0.75"/><rect x="397.84" y="164.0" width="2.4" height="9.2" fill="#f01414"/><rect x="401.66" y="162.7" width="1.1" height="16.3" fill="#19e619" opacity="0.75"/><rect x="401.01" y="167.5" width="2.4" height="9.2" fill="#19e619"/><rect x="404.83" y="168.0" width="1.1" height="24.0" fill="#f01414" opacity="0.75"/><rect x="404.18" y="172.7" width="2.4" height="13.2" fill="#f01414"/><rect x="408.00" y="171.0" width="1.1" height="20.0" fill="#f01414" opacity="0.75"/><rect x="407.35" y="173.9" width="2.4" height="12.9" fill="#f01414"/><rect x="411.16" y="189.6" width="1.1" height="45.8" fill="#f01414" opacity="0.75"/><rect x="410.51" y="195.4" width="2.4" height="29.0" fill="#f01414"/><rect x="414.33" y="204.5" width="1.1" height="25.5" fill="#19e619" opacity="0.75"/><rect x="413.68" y="211.1" width="2.4" height="13.2" fill="#19e619"/><rect x="417.50" y="211.0" width="1.1" height="22.0" fill="#19e619" opacity="0.75"/><rect x="416.85" y="217.1" width="2.4" height="12.0" fill="#19e619"/><rect x="420.67" y="205.8" width="1.1" height="20.2" fill="#f01414" opacity="0.75"/><rect x="420.02" y="210.8" width="2.4" height="10.7" fill="#f01414"/><rect x="423.84" y="208.5" width="1.1" height="16.2" fill="#19e619" opacity="0.75"/><rect x="423.19" y="212.1" width="2.4" height="9.3" fill="#19e619"/><rect x="427.01" y="197.7" width="1.1" height="18.9" fill="#f01414" opacity="0.75"/><rect x="426.36" y="202.8" width="2.4" height="8.3" fill="#f01414"/><rect x="430.17" y="203.0" width="1.1" height="21.7" fill="#f01414" opacity="0.75"/><rect x="429.52" y="207.5" width="2.4" height="12.0" fill="#f01414"/><rect x="433.34" y="191.0" width="1.1" height="17.5" fill="#19e619" opacity="0.75"/><rect x="432.69" y="193.3" width="2.4" height="10.9" fill="#19e619"/><rect x="436.51" y="185.6" width="1.1" height="20.2" fill="#f01414" opacity="0.75"/><rect x="435.86" y="190.4" width="2.4" height="9.4" fill="#f01414"/><rect x="439.68" y="200.0" width="1.1" height="14.0" fill="#f01414" opacity="0.75"/><rect x="439.03" y="203.8" width="2.4" height="7.9" fill="#f01414"/><rect x="442.85" y="201.0" width="1.1" height="13.0" fill="#f01414" opacity="0.75"/><rect x="442.20" y="203.5" width="2.4" height="7.4" fill="#f01414"/><rect x="446.02" y="195.6" width="1.1" height="17.4" fill="#19e619" opacity="0.75"/><rect x="445.37" y="197.8" width="2.4" height="11.7" fill="#19e619"/><rect x="449.18" y="193.0" width="1.1" height="14.7" fill="#19e619" opacity="0.75"/><rect x="448.53" y="195.2" width="2.4" height="10.4" fill="#19e619"/><rect x="452.35" y="193.0" width="1.1" height="8.0" fill="#f01414" opacity="0.75"/><rect x="451.70" y="194.0" width="2.4" height="4.9" fill="#f01414"/><rect x="455.52" y="197.0" width="1.1" height="8.0" fill="#f01414" opacity="0.75"/><rect x="454.87" y="198.1" width="2.4" height="5.5" fill="#f01414"/><rect x="458.69" y="195.6" width="1.1" height="18.4" fill="#19e619" opacity="0.75"/><rect x="458.04" y="199.1" width="2.4" height="9.8" fill="#19e619"/><rect x="461.86" y="194.0" width="1.1" height="28.5" fill="#f01414" opacity="0.75"/><rect x="461.21" y="197.8" width="2.4" height="18.9" fill="#f01414"/><rect x="465.03" y="215.8" width="1.1" height="16.2" fill="#f01414" opacity="0.75"/><rect x="464.38" y="219.3" width="2.4" height="8.1" fill="#f01414"/><rect x="468.19" y="221.0" width="1.1" height="15.0" fill="#f01414" opacity="0.75"/><rect x="467.54" y="225.0" width="2.4" height="6.9" fill="#f01414"/><rect x="471.36" y="211.7" width="1.1" height="18.9" fill="#19e619" opacity="0.75"/><rect x="470.71" y="214.9" width="2.4" height="12.0" fill="#19e619"/><rect x="474.53" y="222.5" width="1.1" height="12.1" fill="#f01414" opacity="0.75"/><rect x="473.88" y="224.7" width="2.4" height="6.5" fill="#f01414"/><rect x="477.70" y="230.6" width="1.1" height="25.4" fill="#f01414" opacity="0.75"/><rect x="477.05" y="238.0" width="2.4" height="14.2" fill="#f01414"/><rect x="480.87" y="248.0" width="1.1" height="13.6" fill="#f01414" opacity="0.75"/><rect x="480.22" y="250.1" width="2.4" height="9.3" fill="#f01414"/><rect x="484.04" y="256.0" width="1.1" height="17.7" fill="#f01414" opacity="0.75"/><rect x="483.39" y="258.9" width="2.4" height="11.2" fill="#f01414"/><rect x="487.20" y="261.6" width="1.1" height="12.1" fill="#f01414" opacity="0.75"/><rect x="486.55" y="264.3" width="2.4" height="7.3" fill="#f01414"/><rect x="490.37" y="237.0" width="1.1" height="39.0" fill="#19e619" opacity="0.75"/><rect x="489.72" y="241.7" width="2.4" height="26.7" fill="#19e619"/><rect x="493.54" y="233.0" width="1.1" height="11.0" fill="#19e619" opacity="0.75"/><rect x="492.89" y="235.1" width="2.4" height="6.5" fill="#19e619"/><rect x="496.71" y="236.0" width="1.1" height="12.0" fill="#19e619" opacity="0.75"/><rect x="496.06" y="239.5" width="2.4" height="5.6" fill="#19e619"/><rect x="499.88" y="234.6" width="1.1" height="9.4" fill="#f01414" opacity="0.75"/><rect x="499.23" y="236.6" width="2.4" height="5.2" fill="#f01414"/><rect x="503.05" y="234.6" width="1.1" height="24.4" fill="#f01414" opacity="0.75"/><rect x="502.40" y="240.5" width="2.4" height="15.3" fill="#f01414"/><rect x="506.21" y="252.0" width="1.1" height="23.0" fill="#f01414" opacity="0.75"/><rect x="505.56" y="258.5" width="2.4" height="10.5" fill="#f01414"/><rect x="509.38" y="269.6" width="1.1" height="27.0" fill="#f01414" opacity="0.75"/><rect x="508.73" y="277.1" width="2.4" height="12.4" fill="#f01414"/><rect x="512.55" y="270.0" width="1.1" height="51.0" fill="#f01414" opacity="0.75"/><rect x="511.90" y="279.7" width="2.4" height="31.5" fill="#f01414"/><rect x="515.72" y="280.6" width="1.1" height="28.4" fill="#19e619" opacity="0.75"/><rect x="515.07" y="284.5" width="2.4" height="17.8" fill="#19e619"/><rect x="518.89" y="278.0" width="1.1" height="31.0" fill="#f01414" opacity="0.75"/><rect x="518.24" y="282.1" width="2.4" height="22.8" fill="#f01414"/><rect x="522.06" y="280.6" width="1.1" height="28.4" fill="#f01414" opacity="0.75"/><rect x="521.41" y="285.1" width="2.4" height="19.7" fill="#f01414"/><rect x="525.22" y="300.8" width="1.1" height="10.8" fill="#f01414" opacity="0.75"/><rect x="524.57" y="302.8" width="2.4" height="7.4" fill="#f01414"/><rect x="528.39" y="306.0" width="1.1" height="12.0" fill="#f01414" opacity="0.75"/><rect x="527.74" y="307.4" width="2.4" height="8.8" fill="#f01414"/><rect x="531.56" y="298.0" width="1.1" height="32.0" fill="#19e619" opacity="0.75"/><rect x="530.91" y="302.4" width="2.4" height="21.6" fill="#19e619"/><rect x="534.73" y="299.0" width="1.1" height="33.0" fill="#f01414" opacity="0.75"/><rect x="534.08" y="303.1" width="2.4" height="19.7" fill="#f01414"/><rect x="537.90" y="314.0" width="1.1" height="18.0" fill="#19e619" opacity="0.75"/><rect x="537.25" y="318.1" width="2.4" height="11.2" fill="#19e619"/><rect x="541.07" y="314.0" width="1.1" height="16.0" fill="#19e619" opacity="0.75"/><rect x="540.42" y="316.6" width="2.4" height="10.4" fill="#19e619"/><rect x="544.23" y="305.0" width="1.1" height="22.7" fill="#19e619" opacity="0.75"/><rect x="543.58" y="309.2" width="2.4" height="15.3" fill="#19e619"/><rect x="547.40" y="311.6" width="1.1" height="14.4" fill="#f01414" opacity="0.75"/><rect x="546.75" y="315.5" width="2.4" height="6.2" fill="#f01414"/><rect x="550.57" y="306.0" width="1.1" height="15.0" fill="#19e619" opacity="0.75"/><rect x="549.92" y="309.1" width="2.4" height="8.8" fill="#19e619"/><rect x="553.74" y="295.0" width="1.1" height="18.0" fill="#19e619" opacity="0.75"/><rect x="553.09" y="297.4" width="2.4" height="13.1" fill="#19e619"/><rect x="556.91" y="291.0" width="1.1" height="31.0" fill="#f01414" opacity="0.75"/><rect x="556.26" y="296.6" width="2.4" height="20.2" fill="#f01414"/><rect x="560.08" y="302.0" width="1.1" height="28.0" fill="#19e619" opacity="0.75"/><rect x="559.43" y="309.5" width="2.4" height="16.3" fill="#19e619"/><rect x="563.24" y="298.0" width="1.1" height="23.0" fill="#19e619" opacity="0.75"/><rect x="562.59" y="300.9" width="2.4" height="13.4" fill="#19e619"/><rect x="566.41" y="302.0" width="1.1" height="16.0" fill="#f01414" opacity="0.75"/><rect x="565.76" y="305.4" width="2.4" height="10.2" fill="#f01414"/><rect x="569.58" y="298.0" width="1.1" height="19.0" fill="#19e619" opacity="0.75"/><rect x="568.93" y="302.1" width="2.4" height="12.5" fill="#19e619"/><rect x="572.75" y="292.7" width="1.1" height="20.3" fill="#f01414" opacity="0.75"/><rect x="572.10" y="297.1" width="2.4" height="9.9" fill="#f01414"/><rect x="575.92" y="309.0" width="1.1" height="16.0" fill="#f01414" opacity="0.75"/><rect x="575.27" y="313.4" width="2.4" height="7.7" fill="#f01414"/><rect x="579.09" y="319.6" width="1.1" height="18.9" fill="#f01414" opacity="0.75"/><rect x="578.44" y="322.8" width="2.4" height="12.2" fill="#f01414"/><rect x="582.25" y="322.0" width="1.1" height="20.5" fill="#f01414" opacity="0.75"/><rect x="581.60" y="325.1" width="2.4" height="12.1" fill="#f01414"/><rect x="585.42" y="314.0" width="1.1" height="27.0" fill="#19e619" opacity="0.75"/><rect x="584.77" y="319.8" width="2.4" height="14.1" fill="#19e619"/><rect x="588.59" y="290.0" width="1.1" height="24.0" fill="#19e619" opacity="0.75"/><rect x="587.94" y="294.3" width="2.4" height="15.9" fill="#19e619"/><rect x="591.76" y="276.6" width="1.1" height="29.4" fill="#19e619" opacity="0.75"/><rect x="591.11" y="284.4" width="2.4" height="12.8" fill="#19e619"/><rect x="594.93" y="274.0" width="1.1" height="22.8" fill="#f01414" opacity="0.75"/><rect x="594.28" y="280.2" width="2.4" height="10.5" fill="#f01414"/><rect x="598.10" y="272.5" width="1.1" height="20.2" fill="#f01414" opacity="0.75"/><rect x="597.45" y="277.9" width="2.4" height="9.7" fill="#f01414"/><rect x="601.26" y="274.0" width="1.1" height="26.0" fill="#19e619" opacity="0.75"/><rect x="600.61" y="278.2" width="2.4" height="16.3" fill="#19e619"/><rect x="604.43" y="271.0" width="1.1" height="24.4" fill="#19e619" opacity="0.75"/><rect x="603.78" y="275.5" width="2.4" height="16.9" fill="#19e619"/><rect x="607.60" y="277.7" width="1.1" height="22.3" fill="#f01414" opacity="0.75"/><rect x="606.95" y="280.5" width="2.4" height="15.7" fill="#f01414"/><rect x="610.77" y="262.0" width="1.1" height="35.0" fill="#19e619" opacity="0.75"/><rect x="610.12" y="267.8" width="2.4" height="20.6" fill="#19e619"/><rect x="613.94" y="252.4" width="1.1" height="14.6" fill="#19e619" opacity="0.75"/><rect x="613.29" y="256.7" width="2.4" height="7.4" fill="#19e619"/><rect x="617.11" y="250.8" width="1.1" height="28.0" fill="#f01414" opacity="0.75"/><rect x="616.46" y="258.9" width="2.4" height="11.6" fill="#f01414"/><rect x="620.27" y="273.4" width="1.1" height="24.6" fill="#f01414" opacity="0.75"/><rect x="619.62" y="280.6" width="2.4" height="12.9" fill="#f01414"/><rect x="623.44" y="292.7" width="1.1" height="18.9" fill="#f01414" opacity="0.75"/><rect x="622.79" y="295.7" width="2.4" height="12.8" fill="#f01414"/><rect x="626.61" y="306.0" width="1.1" height="19.0" fill="#f01414" opacity="0.75"/><rect x="625.96" y="309.0" width="2.4" height="13.1" fill="#f01414"/><rect x="629.78" y="317.0" width="1.1" height="16.0" fill="#f01414" opacity="0.75"/><rect x="629.13" y="320.7" width="2.4" height="7.8" fill="#f01414"/><rect x="632.95" y="322.0" width="1.1" height="8.0" fill="#19e619" opacity="0.75"/><rect x="632.30" y="324.2" width="2.4" height="4.2" fill="#19e619"/><rect x="636.12" y="319.6" width="1.1" height="14.9" fill="#f01414" opacity="0.75"/><rect x="635.47" y="323.1" width="2.4" height="7.4" fill="#f01414"/><rect x="639.28" y="309.0" width="1.1" height="18.7" fill="#19e619" opacity="0.75"/><rect x="638.63" y="311.5" width="2.4" height="11.7" fill="#19e619"/><rect x="642.45" y="295.4" width="1.1" height="28.3" fill="#f01414" opacity="0.75"/><rect x="641.80" y="303.4" width="2.4" height="12.9" fill="#f01414"/><rect x="645.62" y="280.6" width="1.1" height="44.4" fill="#19e619" opacity="0.75"/><rect x="644.97" y="291.9" width="2.4" height="23.9" fill="#19e619"/><rect x="648.79" y="269.8" width="1.1" height="25.6" fill="#19e619" opacity="0.75"/><rect x="648.14" y="273.7" width="2.4" height="15.0" fill="#19e619"/><rect x="651.96" y="270.0" width="1.1" height="29.6" fill="#f01414" opacity="0.75"/><rect x="651.31" y="275.3" width="2.4" height="16.5" fill="#f01414"/><rect x="655.13" y="287.5" width="1.1" height="18.5" fill="#19e619" opacity="0.75"/><rect x="654.48" y="293.0" width="2.4" height="9.5" fill="#19e619"/><rect x="658.29" y="291.6" width="1.1" height="24.2" fill="#f01414" opacity="0.75"/><rect x="657.64" y="296.3" width="2.4" height="12.5" fill="#f01414"/><rect x="661.46" y="291.6" width="1.1" height="26.9" fill="#19e619" opacity="0.75"/><rect x="660.81" y="298.3" width="2.4" height="16.1" fill="#19e619"/><rect x="664.63" y="270.0" width="1.1" height="33.7" fill="#19e619" opacity="0.75"/><rect x="663.98" y="274.8" width="2.4" height="23.9" fill="#19e619"/><rect x="667.80" y="243.0" width="1.1" height="31.0" fill="#19e619" opacity="0.75"/><rect x="667.15" y="251.8" width="2.4" height="14.0" fill="#19e619"/><rect x="670.97" y="255.0" width="1.1" height="17.7" fill="#19e619" opacity="0.75"/><rect x="670.32" y="257.6" width="2.4" height="10.4" fill="#19e619"/><rect x="674.14" y="249.8" width="1.1" height="22.9" fill="#19e619" opacity="0.75"/><rect x="673.49" y="256.6" width="2.4" height="10.7" fill="#19e619"/><rect x="677.30" y="245.8" width="1.1" height="21.2" fill="#f01414" opacity="0.75"/><rect x="676.65" y="249.7" width="2.4" height="12.7" fill="#f01414"/><rect x="680.47" y="233.7" width="1.1" height="37.7" fill="#f01414" opacity="0.75"/><rect x="679.82" y="239.1" width="2.4" height="27.7" fill="#f01414"/><rect x="683.64" y="263.0" width="1.1" height="9.7" fill="#19e619" opacity="0.75"/><rect x="682.99" y="265.9" width="2.4" height="4.5" fill="#19e619"/><rect x="686.81" y="260.6" width="1.1" height="9.4" fill="#19e619" opacity="0.75"/><rect x="686.16" y="262.6" width="2.4" height="4.7" fill="#19e619"/><rect x="689.98" y="253.9" width="1.1" height="13.1" fill="#19e619" opacity="0.75"/><rect x="689.33" y="256.5" width="2.4" height="6.9" fill="#19e619"/><rect x="693.15" y="247.0" width="1.1" height="15.0" fill="#19e619" opacity="0.75"/><rect x="692.50" y="251.0" width="2.4" height="8.6" fill="#19e619"/><rect x="696.31" y="243.0" width="1.1" height="15.0" fill="#f01414" opacity="0.75"/><rect x="695.66" y="245.5" width="2.4" height="9.9" fill="#f01414"/><rect x="699.48" y="249.8" width="1.1" height="9.2" fill="#19e619" opacity="0.75"/><rect x="698.83" y="251.3" width="2.4" height="5.6" fill="#19e619"/><rect x="702.65" y="235.0" width="1.1" height="20.0" fill="#19e619" opacity="0.75"/><rect x="702.00" y="238.3" width="2.4" height="12.8" fill="#19e619"/><rect x="705.82" y="239.0" width="1.1" height="17.6" fill="#f01414" opacity="0.75"/><rect x="705.17" y="241.5" width="2.4" height="10.1" fill="#f01414"/><rect x="708.99" y="240.0" width="1.1" height="20.6" fill="#f01414" opacity="0.75"/><rect x="708.34" y="243.8" width="2.4" height="12.6" fill="#f01414"/><rect x="712.16" y="245.8" width="1.1" height="18.8" fill="#f01414" opacity="0.75"/><rect x="711.51" y="250.0" width="2.4" height="9.3" fill="#f01414"/><rect x="715.32" y="248.5" width="1.1" height="16.1" fill="#19e619" opacity="0.75"/><rect x="714.67" y="251.7" width="2.4" height="8.4" fill="#19e619"/><rect x="718.49" y="245.8" width="1.1" height="22.9" fill="#f01414" opacity="0.75"/><rect x="717.84" y="250.6" width="2.4" height="13.1" fill="#f01414"/><rect x="721.66" y="247.0" width="1.1" height="24.0" fill="#f01414" opacity="0.75"/><rect x="721.01" y="252.1" width="2.4" height="15.9" fill="#f01414"/><rect x="724.83" y="253.9" width="1.1" height="16.1" fill="#f01414" opacity="0.75"/><rect x="724.18" y="257.1" width="2.4" height="10.4" fill="#f01414"/><rect x="728.00" y="256.6" width="1.1" height="14.8" fill="#19e619" opacity="0.75"/><rect x="727.35" y="258.4" width="2.4" height="9.1" fill="#19e619"/><rect x="731.17" y="256.6" width="1.1" height="17.4" fill="#f01414" opacity="0.75"/><rect x="730.52" y="259.2" width="2.4" height="11.2" fill="#f01414"/><rect x="734.33" y="262.0" width="1.1" height="21.5" fill="#f01414" opacity="0.75"/><rect x="733.68" y="267.4" width="2.4" height="11.4" fill="#f01414"/><rect x="737.50" y="270.0" width="1.1" height="22.9" fill="#f01414" opacity="0.75"/><rect x="736.85" y="274.1" width="2.4" height="13.9" fill="#f01414"/><rect x="740.67" y="284.8" width="1.1" height="22.9" fill="#f01414" opacity="0.75"/><rect x="740.02" y="289.8" width="2.4" height="11.9" fill="#f01414"/><rect x="743.84" y="299.6" width="1.1" height="21.4" fill="#f01414" opacity="0.75"/><rect x="743.19" y="302.6" width="2.4" height="13.7" fill="#f01414"/><rect x="747.01" y="283.5" width="1.1" height="26.9" fill="#19e619" opacity="0.75"/><rect x="746.36" y="287.9" width="2.4" height="17.9" fill="#19e619"/><rect x="750.18" y="278.0" width="1.1" height="19.0" fill="#19e619" opacity="0.75"/><rect x="749.53" y="282.9" width="2.4" height="10.1" fill="#19e619"/><rect x="753.34" y="264.6" width="1.1" height="21.4" fill="#19e619" opacity="0.75"/><rect x="752.69" y="269.3" width="2.4" height="11.2" fill="#19e619"/><rect x="756.51" y="259.0" width="1.1" height="21.8" fill="#19e619" opacity="0.75"/><rect x="755.86" y="265.2" width="2.4" height="11.2" fill="#19e619"/><rect x="759.68" y="256.6" width="1.1" height="18.8" fill="#19e619" opacity="0.75"/><rect x="759.03" y="260.9" width="2.4" height="10.5" fill="#19e619"/><rect x="762.85" y="255.0" width="1.1" height="13.7" fill="#19e619" opacity="0.75"/><rect x="762.20" y="257.9" width="2.4" height="7.4" fill="#19e619"/><rect x="766.02" y="260.6" width="1.1" height="13.4" fill="#f01414" opacity="0.75"/><rect x="765.37" y="263.3" width="2.4" height="7.8" fill="#f01414"/><rect x="769.19" y="260.6" width="1.1" height="12.1" fill="#19e619" opacity="0.75"/><rect x="768.54" y="263.1" width="2.4" height="6.1" fill="#19e619"/><rect x="772.35" y="262.0" width="1.1" height="6.7" fill="#19e619" opacity="0.75"/><rect x="771.70" y="263.6" width="2.4" height="3.2" fill="#19e619"/><rect x="775.52" y="258.0" width="1.1" height="9.3" fill="#19e619" opacity="0.75"/><rect x="774.87" y="260.7" width="2.4" height="5.1" fill="#19e619"/><rect x="778.69" y="249.8" width="1.1" height="16.2" fill="#19e619" opacity="0.75"/><rect x="778.04" y="253.4" width="2.4" height="7.9" fill="#19e619"/><rect x="781.86" y="248.5" width="1.1" height="18.5" fill="#f01414" opacity="0.75"/><rect x="781.21" y="253.5" width="2.4" height="10.8" fill="#f01414"/><rect x="785.03" y="264.6" width="1.1" height="27.0" fill="#f01414" opacity="0.75"/><rect x="784.38" y="268.4" width="2.4" height="17.8" fill="#f01414"/><rect x="788.20" y="274.0" width="1.1" height="20.0" fill="#19e619" opacity="0.75"/><rect x="787.55" y="276.7" width="2.4" height="14.1" fill="#19e619"/><rect x="791.36" y="267.5" width="1.1" height="18.5" fill="#19e619" opacity="0.75"/><rect x="790.71" y="270.0" width="2.4" height="11.6" fill="#19e619"/><rect x="794.53" y="270.0" width="1.1" height="15.5" fill="#f01414" opacity="0.75"/><rect x="793.88" y="274.0" width="2.4" height="7.1" fill="#f01414"/><rect x="797.70" y="275.4" width="1.1" height="16.3" fill="#f01414" opacity="0.75"/><rect x="797.05" y="277.8" width="2.4" height="9.8" fill="#f01414"/><rect x="800.87" y="282.0" width="1.1" height="16.5" fill="#f01414" opacity="0.75"/><rect x="800.22" y="285.9" width="2.4" height="10.2" fill="#f01414"/><rect x="804.04" y="287.7" width="1.1" height="13.3" fill="#19e619" opacity="0.75"/><rect x="803.39" y="291.4" width="2.4" height="5.7" fill="#19e619"/><rect x="807.21" y="271.5" width="1.1" height="18.5" fill="#19e619" opacity="0.75"/><rect x="806.56" y="274.5" width="2.4" height="10.2" fill="#19e619"/><rect x="810.37" y="250.0" width="1.1" height="40.0" fill="#f01414" opacity="0.75"/><rect x="809.72" y="257.7" width="2.4" height="24.0" fill="#f01414"/><rect x="813.54" y="275.6" width="1.1" height="12.1" fill="#19e619" opacity="0.75"/><rect x="812.89" y="279.2" width="2.4" height="5.2" fill="#19e619"/><rect x="816.71" y="274.0" width="1.1" height="16.4" fill="#f01414" opacity="0.75"/><rect x="816.06" y="276.4" width="2.4" height="10.7" fill="#f01414"/><rect x="819.88" y="287.7" width="1.1" height="18.9" fill="#f01414" opacity="0.75"/><rect x="819.23" y="291.7" width="2.4" height="11.5" fill="#f01414"/><rect x="823.05" y="293.0" width="1.1" height="25.7" fill="#f01414" opacity="0.75"/><rect x="822.40" y="297.0" width="2.4" height="17.2" fill="#f01414"/><rect x="826.22" y="301.0" width="1.1" height="16.0" fill="#19e619" opacity="0.75"/><rect x="825.57" y="305.0" width="2.4" height="10.0" fill="#19e619"/><rect x="829.38" y="306.6" width="1.1" height="13.4" fill="#19e619" opacity="0.75"/><rect x="828.73" y="309.5" width="2.4" height="7.8" fill="#19e619"/><rect x="832.55" y="303.8" width="1.1" height="18.9" fill="#f01414" opacity="0.75"/><rect x="831.90" y="306.1" width="2.4" height="13.2" fill="#f01414"/><rect x="835.72" y="306.6" width="1.1" height="14.8" fill="#19e619" opacity="0.75"/><rect x="835.07" y="310.0" width="2.4" height="8.2" fill="#19e619"/><rect x="838.89" y="302.5" width="1.1" height="17.5" fill="#19e619" opacity="0.75"/><rect x="838.24" y="304.8" width="2.4" height="10.0" fill="#19e619"/><rect x="842.06" y="302.5" width="1.1" height="22.9" fill="#f01414" opacity="0.75"/><rect x="841.41" y="308.5" width="2.4" height="10.1" fill="#f01414"/><rect x="845.23" y="309.0" width="1.1" height="21.8" fill="#f01414" opacity="0.75"/><rect x="844.58" y="312.0" width="2.4" height="15.1" fill="#f01414"/><rect x="848.39" y="313.3" width="1.1" height="17.5" fill="#19e619" opacity="0.75"/><rect x="847.74" y="315.5" width="2.4" height="10.7" fill="#19e619"/><rect x="851.56" y="320.0" width="1.1" height="16.0" fill="#f01414" opacity="0.75"/><rect x="850.91" y="322.7" width="2.4" height="11.0" fill="#f01414"/><rect x="854.73" y="321.4" width="1.1" height="14.6" fill="#19e619" opacity="0.75"/><rect x="854.08" y="324.3" width="2.4" height="7.6" fill="#19e619"/><rect x="857.90" y="324.0" width="1.1" height="19.0" fill="#f01414" opacity="0.75"/><rect x="857.25" y="329.1" width="2.4" height="10.8" fill="#f01414"/><rect x="861.07" y="336.0" width="1.1" height="19.0" fill="#f01414" opacity="0.75"/><rect x="860.42" y="338.8" width="2.4" height="10.8" fill="#f01414"/><rect x="864.24" y="332.0" width="1.1" height="16.3" fill="#f01414" opacity="0.75"/><rect x="863.59" y="335.6" width="2.4" height="8.7" fill="#f01414"/><rect x="867.40" y="334.8" width="1.1" height="13.5" fill="#19e619" opacity="0.75"/><rect x="866.75" y="336.6" width="2.4" height="9.9" fill="#19e619"/><rect x="870.57" y="332.0" width="1.1" height="17.6" fill="#19e619" opacity="0.75"/><rect x="869.92" y="336.3" width="2.4" height="9.8" fill="#19e619"/><rect x="873.74" y="342.0" width="1.1" height="22.0" fill="#f01414" opacity="0.75"/><rect x="873.09" y="344.9" width="2.4" height="12.7" fill="#f01414"/><rect x="876.91" y="360.0" width="1.1" height="12.5" fill="#f01414" opacity="0.75"/><rect x="876.26" y="362.9" width="2.4" height="6.3" fill="#f01414"/><rect x="880.08" y="364.0" width="1.1" height="14.0" fill="#f01414" opacity="0.75"/><rect x="879.43" y="365.9" width="2.4" height="8.3" fill="#f01414"/><rect x="883.25" y="367.0" width="1.1" height="11.0" fill="#f01414" opacity="0.75"/><rect x="882.60" y="368.5" width="2.4" height="6.5" fill="#f01414"/><rect x="886.41" y="369.8" width="1.1" height="8.2" fill="#19e619" opacity="0.75"/><rect x="885.76" y="371.5" width="2.4" height="5.1" fill="#19e619"/><rect x="889.58" y="369.8" width="1.1" height="8.2" fill="#f01414" opacity="0.75"/><rect x="888.93" y="371.6" width="2.4" height="4.0" fill="#f01414"/><rect x="892.75" y="352.0" width="1.1" height="24.6" fill="#19e619" opacity="0.75"/><rect x="892.10" y="356.1" width="2.4" height="16.9" fill="#19e619"/><rect x="895.92" y="372.0" width="1.1" height="16.0" fill="#f01414" opacity="0.75"/><rect x="895.27" y="375.4" width="2.4" height="10.0" fill="#f01414"/><rect x="899.09" y="378.5" width="1.1" height="12.2" fill="#f01414" opacity="0.75"/><rect x="898.44" y="380.2" width="2.4" height="8.7" fill="#f01414"/><rect x="902.26" y="382.0" width="1.1" height="19.0" fill="#f01414" opacity="0.75"/><rect x="901.61" y="384.5" width="2.4" height="13.6" fill="#f01414"/><rect x="905.42" y="379.0" width="1.1" height="25.0" fill="#19e619" opacity="0.75"/><rect x="904.77" y="383.4" width="2.4" height="16.2" fill="#19e619"/><rect x="908.59" y="374.0" width="1.1" height="12.0" fill="#f01414" opacity="0.75"/><rect x="907.94" y="377.1" width="2.4" height="6.9" fill="#f01414"/><rect x="911.76" y="380.6" width="1.1" height="17.4" fill="#f01414" opacity="0.75"/><rect x="911.11" y="384.3" width="2.4" height="11.1" fill="#f01414"/><rect x="914.93" y="390.0" width="1.1" height="10.8" fill="#f01414" opacity="0.75"/><rect x="914.28" y="392.0" width="2.4" height="7.5" fill="#f01414"/><rect x="918.10" y="392.7" width="1.1" height="14.8" fill="#19e619" opacity="0.75"/><rect x="917.45" y="395.1" width="2.4" height="10.5" fill="#19e619"/><rect x="921.27" y="383.0" width="1.1" height="16.5" fill="#19e619" opacity="0.75"/><rect x="920.62" y="387.2" width="2.4" height="8.7" fill="#19e619"/><rect x="924.43" y="379.0" width="1.1" height="15.0" fill="#19e619" opacity="0.75"/><rect x="923.78" y="381.3" width="2.4" height="9.6" fill="#19e619"/><rect x="927.60" y="379.0" width="1.1" height="12.4" fill="#f01414" opacity="0.75"/><rect x="926.95" y="382.6" width="2.4" height="7.1" fill="#f01414"/><rect x="930.77" y="384.6" width="1.1" height="14.9" fill="#f01414" opacity="0.75"/><rect x="930.12" y="388.6" width="2.4" height="8.0" fill="#f01414"/><rect x="933.94" y="395.4" width="1.1" height="14.6" fill="#f01414" opacity="0.75"/><rect x="933.29" y="398.5" width="2.4" height="7.6" fill="#f01414"/><rect x="937.11" y="406.0" width="1.1" height="8.0" fill="#f01414" opacity="0.75"/><rect x="936.46" y="407.5" width="2.4" height="4.8" fill="#f01414"/><rect x="940.28" y="411.6" width="1.1" height="9.4" fill="#f01414" opacity="0.75"/><rect x="939.63" y="413.9" width="2.4" height="4.3" fill="#f01414"/><rect x="943.44" y="417.0" width="1.1" height="12.0" fill="#f01414" opacity="0.75"/><rect x="942.79" y="419.2" width="2.4" height="6.6" fill="#f01414"/><rect x="946.61" y="413.0" width="1.1" height="17.0" fill="#19e619" opacity="0.75"/><rect x="945.96" y="417.2" width="2.4" height="8.8" fill="#19e619"/><rect x="949.78" y="413.0" width="1.1" height="13.4" fill="#f01414" opacity="0.75"/><rect x="949.13" y="415.6" width="2.4" height="8.4" fill="#f01414"/><rect x="952.95" y="421.0" width="1.1" height="9.0" fill="#f01414" opacity="0.75"/><rect x="952.30" y="422.2" width="2.4" height="6.5" fill="#f01414"/><rect x="287.0" y="106.0" width="2" height="3.0" fill="#505050"/><rect x="306.0" y="106.0" width="2" height="3.5" fill="#19e619"/></svg><div class="t" style="left:1041.0px;top:49.1px;font-size:9.4px;line-height:11.3px;color:#e4e4e4;font-weight:400;transform:scaleX(0.765);transform-origin:0 50%;">1.14745</div><div class="t" style="left:1041.0px;top:74.5px;font-size:9.4px;line-height:11.3px;color:#e4e4e4;font-weight:400;transform:scaleX(0.765);transform-origin:0 50%;">1.14160</div><div class="t" style="left:1041.0px;top:99.9px;font-size:9.4px;line-height:11.3px;color:#e4e4e4;font-weight:400;transform:scaleX(0.765);transform-origin:0 50%;">1.13575</div><div class="t" style="left:1041.0px;top:125.4px;font-size:9.4px;line-height:11.3px;color:#e4e4e4;font-weight:400;transform:scaleX(0.765);transform-origin:0 50%;">1.12990</div><div class="t" style="left:1041.0px;top:150.8px;font-size:9.4px;line-height:11.3px;color:#e4e4e4;font-weight:400;transform:scaleX(0.765);transform-origin:0 50%;">1.12405</div><div class="t" style="left:1041.0px;top:176.3px;font-size:9.4px;line-height:11.3px;color:#e4e4e4;font-weight:400;transform:scaleX(0.781);transform-origin:0 50%;">1.11820</div><div class="t" style="left:1041.0px;top:201.7px;font-size:9.4px;line-height:11.3px;color:#e4e4e4;font-weight:400;transform:scaleX(0.781);transform-origin:0 50%;">1.11235</div><div class="t" style="left:1041.0px;top:227.1px;font-size:9.4px;line-height:11.3px;color:#e4e4e4;font-weight:400;transform:scaleX(0.765);transform-origin:0 50%;">1.10650</div><div class="t" style="left:1041.0px;top:252.6px;font-size:9.4px;line-height:11.3px;color:#e4e4e4;font-weight:400;transform:scaleX(0.765);transform-origin:0 50%;">1.10065</div><div class="t" style="left:1041.0px;top:278.0px;font-size:9.4px;line-height:11.3px;color:#e4e4e4;font-weight:400;transform:scaleX(0.765);transform-origin:0 50%;">1.09480</div><div class="t" style="left:1041.0px;top:303.5px;font-size:9.4px;line-height:11.3px;color:#e4e4e4;font-weight:400;transform:scaleX(0.765);transform-origin:0 50%;">1.08895</div><div class="t" style="left:1041.0px;top:328.9px;font-size:9.4px;line-height:11.3px;color:#e4e4e4;font-weight:400;transform:scaleX(0.765);transform-origin:0 50%;">1.08310</div><div class="t" style="left:1041.0px;top:354.3px;font-size:9.4px;line-height:11.3px;color:#e4e4e4;font-weight:400;transform:scaleX(0.765);transform-origin:0 50%;">1.07725</div><div class="t" style="left:1041.0px;top:379.8px;font-size:9.4px;line-height:11.3px;color:#e4e4e4;font-weight:400;transform:scaleX(0.765);transform-origin:0 50%;">1.07140</div><div class="t" style="left:1041.0px;top:405.2px;font-size:9.4px;line-height:11.3px;color:#e4e4e4;font-weight:400;transform:scaleX(0.765);transform-origin:0 50%;">1.06555</div><div class="t" style="left:199.7px;top:438.1px;font-size:8.8px;line-height:10.6px;color:#e4e4e4;font-weight:400;transform:scaleX(0.830);transform-origin:0 50%;">19 Mar 2019</div><div class="t" style="left:250.3px;top:438.1px;font-size:8.8px;line-height:10.6px;color:#e4e4e4;font-weight:400;transform:scaleX(0.830);transform-origin:0 50%;">10 Apr 2019</div><div class="t" style="left:301.0px;top:438.1px;font-size:8.8px;line-height:10.6px;color:#e4e4e4;font-weight:400;transform:scaleX(0.830);transform-origin:0 50%;">2 May 2019</div><div class="t" style="left:351.6px;top:438.1px;font-size:8.8px;line-height:10.6px;color:#e4e4e4;font-weight:400;transform:scaleX(0.830);transform-origin:0 50%;">24 May 2019</div><div class="t" style="left:402.3px;top:438.1px;font-size:8.8px;line-height:10.6px;color:#e4e4e4;font-weight:400;transform:scaleX(0.830);transform-origin:0 50%;">17 Jun 2019</div><div class="t" style="left:452.9px;top:438.1px;font-size:8.8px;line-height:10.6px;color:#e4e4e4;font-weight:400;transform:scaleX(0.830);transform-origin:0 50%;">9 Jul 2019</div><div class="t" style="left:503.6px;top:438.1px;font-size:8.8px;line-height:10.6px;color:#e4e4e4;font-weight:400;transform:scaleX(0.830);transform-origin:0 50%;">31 Jul 2019</div><div class="t" style="left:554.2px;top:438.1px;font-size:8.8px;line-height:10.6px;color:#e4e4e4;font-weight:400;transform:scaleX(0.830);transform-origin:0 50%;">22 Aug 2019</div><div class="t" style="left:604.9px;top:438.1px;font-size:8.8px;line-height:10.6px;color:#e4e4e4;font-weight:400;transform:scaleX(0.830);transform-origin:0 50%;">13 Sep 2019</div><div class="t" style="left:655.5px;top:438.1px;font-size:8.8px;line-height:10.6px;color:#e4e4e4;font-weight:400;transform:scaleX(0.830);transform-origin:0 50%;">7 Oct 2019</div><div class="t" style="left:706.2px;top:438.1px;font-size:8.8px;line-height:10.6px;color:#e4e4e4;font-weight:400;transform:scaleX(0.830);transform-origin:0 50%;">29 Oct 2019</div><div class="t" style="left:756.8px;top:438.1px;font-size:8.8px;line-height:10.6px;color:#e4e4e4;font-weight:400;transform:scaleX(0.830);transform-origin:0 50%;">20 Nov 2019</div><div class="t" style="left:807.5px;top:438.1px;font-size:8.8px;line-height:10.6px;color:#e4e4e4;font-weight:400;transform:scaleX(0.830);transform-origin:0 50%;">12 Dec 2019</div><div class="t" style="left:858.1px;top:438.1px;font-size:8.8px;line-height:10.6px;color:#e4e4e4;font-weight:400;transform:scaleX(0.830);transform-origin:0 50%;">7 Jan 2020</div><div class="t" style="left:908.8px;top:438.1px;font-size:8.8px;line-height:10.6px;color:#e4e4e4;font-weight:400;transform:scaleX(0.830);transform-origin:0 50%;">29 Jan 2020</div><div class="b" style="left:1039px;top:425.9px;width:30.8px;height:7.9px;background:#aab6c8"></div><div class="t" style="left:1040.0px;top:424.5px;font-size:9px;line-height:10.8px;color:#1a2a50;font-weight:400;transform:scaleX(0.879);transform-origin:0 50%;">1.06114</div><div class="t" style="left:287.4px;top:47.0px;font-size:8px;line-height:9.6px;color:#f0f0f0;font-weight:400;transform:scaleX(0.924);transform-origin:0 50%;">1.06271 1.06294 1.06110 1.06114</div><div class="b" style="left:200px;top:60.5px;width:98.5px;height:15px;background:#fff"></div><div class="b" style="left:298.5px;top:60.5px;width:14.8px;height:15px;background:#e6e6e6;border-left:1px solid #ccc;box-sizing:border-box"></div><svg class="b" style="left:301px;top:64px" width="10" height="8"><path d="M2.5 5 L5 2.5 L7.5 5 Z" fill="#222"/></svg><div class="t" style="left:285.3px;top:61.7px;font-size:10.5px;line-height:12.6px;color:#333;font-weight:400;transform:scaleX(0.813);transform-origin:0 50%;">01</div><div class="b" style="left:315.5px;top:60.5px;width:34px;height:16.7px;background:linear-gradient(#4a4af6,#3838ea)"></div><div class="t" style="left:281.7px;width:100px;text-align:center;top:61.7px;font-size:11.5px;line-height:13.8px;color:#dfe6ff;font-weight:400;transform:scaleX(0.740);transform-origin:50% 50%;">BUY</div><div class="b" style="left:200px;top:77.2px;width:149.4px;height:28px;background:linear-gradient(#2d2df2,#1212c4)"></div><div class="b" style="left:316px;top:77.2px;width:33.4px;height:0.8px;background:#5a5af0"></div><div class="t" style="left:287.8px;top:90.2px;font-size:10.5px;line-height:12.6px;color:#f4f4ff;font-weight:700;transform:scaleX(0.910);transform-origin:0 50%;">1.06</div><div class="t" style="left:310.5px;top:76.5px;font-size:25px;line-height:30.0px;color:#f8f8ff;font-weight:400;transform:scaleX(0.867);transform-origin:0 50%;-webkit-text-stroke:0">12</div><div class="t" style="left:339.5px;top:80.5px;font-size:10px;line-height:12.0px;color:#f4f4ff;font-weight:400;transform:scaleX(0.719);transform-origin:0 50%;">1</div><div class="b" style="left:197.5px;top:450px;width:882.5px;height:17px;background:#f0f0f0"></div><div class="b" style="left:197.5px;top:450px;width:882.5px;height:1.2px;background:#fafafa"></div><div class="b" style="left:197.5px;top:451.2px;width:882.5px;height:1px;background:#a8a8a8"></div><div class="t" style="left:208.3px;top:453.7px;font-size:9.6px;line-height:11.5px;color:#8a8a8a;font-weight:400;transform:scaleX(0.860);transform-origin:0 50%;">EURUSD,Daily</div><div class="b" style="left:274.8px;top:453.5px;width:1px;height:11px;background:#909090"></div><div class="t" style="left:285.0px;top:453.7px;font-size:9.6px;line-height:11.5px;color:#8a8a8a;font-weight:400;transform:scaleX(0.860);transform-origin:0 50%;">GBPUSD,Daily</div><div class="b" style="left:352.2px;top:453.5px;width:1px;height:11px;background:#909090"></div><div class="t" style="left:361.7px;top:453.7px;font-size:9.6px;line-height:11.5px;color:#8a8a8a;font-weight:400;transform:scaleX(0.860);transform-origin:0 50%;">USDJPY,Daily</div><div class="b" style="left:425.5px;top:453.5px;width:1px;height:11px;background:#909090"></div><div class="t" style="left:435.0px;top:453.7px;font-size:9.6px;line-height:11.5px;color:#8a8a8a;font-weight:400;transform:scaleX(0.860);transform-origin:0 50%;">XAUUSD,Daily</div><div class="b" style="left:502.8px;top:453.5px;width:1px;height:11px;background:#909090"></div><div class="t" style="left:512.7px;top:453.7px;font-size:9.6px;line-height:11.5px;color:#8a8a8a;font-weight:400;transform:scaleX(0.860);transform-origin:0 50%;">AUDUSD,H1</div><div class="b" style="left:575px;top:450.5px;width:74.3px;height:16px;background:#fff;border:1px solid #555;border-top:none;box-sizing:border-box"></div><div class="t" style="left:582.7px;top:453.5px;font-size:9.6px;line-height:11.5px;color:#222;font-weight:400;transform:scaleX(0.910);transform-origin:0 50%;">EURCHF,Daily</div><svg class="b" style="left:1046px;top:455px" width="28" height="10"><path d="M7 2 L4 5 L7 8 Z" fill="#a0a0a0"/><path d="M21 2 L24 5 L21 8 Z" fill="#a0a0a0"/></svg><div class="b" style="left:197.5px;top:466.5px;width:882.5px;height:1px;background:#dcdcdc"></div><div class="b" style="left:0px;top:467.5px;width:1080px;height:3px;background:#f0f0f0"></div><div class="b" style="left:0px;top:470.6px;width:1080px;height:69.4px;background:#f0f0f0"></div><div class="b" style="left:0px;top:470.6px;width:9.5px;height:69.4px;background:#f0f0f0"></div><div class="b" style="left:0px;top:470.6px;width:8.5px;height:65.5px;background:#dde5ee"></div><div class="b" style="left:8.5px;top:470.6px;width:1px;height:65.5px;background:#c0c8d0"></div><svg class="b" style="left:0px;top:470px" width="10" height="10"><path d="M2.3 2.5 L6.8 7 M6.8 2.5 L2.3 7" stroke="#111" stroke-width="1.3"/></svg><div class="t" style="left:-11px;top:515px;width:32px;height:11px;font-size:9.4px;line-height:11px;color:#333;transform:rotate(-90deg);text-align:center">Toolbox</div><div class="b" style="left:9.5px;top:470.6px;width:1066.5px;height:19.4px;background:#fff"></div><div class="b" style="left:125.9px;top:471.5px;width:1px;height:18px;background:#e8e8e8"></div><div class="b" style="left:207.8px;top:471.5px;width:1px;height:18px;background:#e8e8e8"></div><div class="b" style="left:318.9px;top:471.5px;width:1px;height:18px;background:#e8e8e8"></div><div class="b" style="left:409.2px;top:471.5px;width:1px;height:18px;background:#e8e8e8"></div><div class="b" style="left:498.9px;top:471.5px;width:1px;height:18px;background:#e8e8e8"></div><div class="b" style="left:590.1px;top:471.5px;width:1px;height:18px;background:#e8e8e8"></div><div class="b" style="left:680.9px;top:471.5px;width:1px;height:18px;background:#e8e8e8"></div><div class="b" style="left:769.9px;top:471.5px;width:1px;height:18px;background:#e8e8e8"></div><div class="b" style="left:860.5px;top:471.5px;width:1px;height:18px;background:#e8e8e8"></div><div class="b" style="left:951.1px;top:471.5px;width:1px;height:18px;background:#e8e8e8"></div><div class="t" style="left:14.6px;top:474.7px;font-size:9.6px;line-height:11.5px;color:#333;font-weight:400;transform:scaleX(0.950);transform-origin:0 50%;">Symbol</div><div class="t" style="left:132.7px;top:474.7px;font-size:9.6px;line-height:11.5px;color:#333;font-weight:400;transform:scaleX(0.950);transform-origin:0 50%;">Ticket</div><div class="t" style="right:766.1px;top:474.7px;font-size:9.6px;line-height:11.5px;color:#333;font-weight:400;transform:scaleX(0.950);transform-origin:100% 50%;">Time</div><div class="t" style="right:675.8px;top:474.7px;font-size:9.6px;line-height:11.5px;color:#333;font-weight:400;transform:scaleX(0.950);transform-origin:100% 50%;">Type</div><div class="t" style="right:584.7px;top:474.7px;font-size:9.6px;line-height:11.5px;color:#333;font-weight:400;transform:scaleX(0.950);transform-origin:100% 50%;">Volume</div><div class="t" style="right:494.4px;top:474.7px;font-size:9.6px;line-height:11.5px;color:#333;font-weight:400;transform:scaleX(0.950);transform-origin:100% 50%;">Price</div><div class="t" style="right:404.2px;top:474.7px;font-size:9.6px;line-height:11.5px;color:#333;font-weight:400;transform:scaleX(0.950);transform-origin:100% 50%;">S / L</div><div class="t" style="right:223.4px;top:474.7px;font-size:9.6px;line-height:11.5px;color:#333;font-weight:400;transform:scaleX(0.950);transform-origin:100% 50%;">Price</div><div class="t" style="right:133.7px;top:474.7px;font-size:9.6px;line-height:11.5px;color:#333;font-weight:400;transform:scaleX(0.950);transform-origin:100% 50%;">Swap</div><div class="t" style="right:7.7px;top:474.7px;font-size:9.6px;line-height:11.5px;color:#333;font-weight:400;transform:scaleX(0.950);transform-origin:100% 50%;">Profit</div><div class="t" style="left:728.0px;top:474.7px;font-size:9.6px;line-height:11.5px;color:#333;font-weight:400;transform:scaleX(0.970);transform-origin:0 50%;">T / P</div><svg class="b" style="left:757px;top:477px" width="10" height="7"><path d="M1.5 1.5 L8.5 1.5 L5 5.5 Z" fill="#222"/></svg><div class="b" style="left:9.5px;top:490px;width:1066.5px;height:16px;background:#c9c9c9"></div><svg class="b" style="left:14px;top:494px" width="9" height="8"><path d="M1.5 2.5 L4.5 5.5 L7.5 2.5" stroke="#777" stroke-width="1.1" fill="none"/></svg><div class="t" style="left:27.5px;top:492.2px;font-size:9.6px;line-height:11.5px;color:#111;font-weight:700;transform:scaleX(0.965);transform-origin:0 50%;">Balance: 1 000.00 USD&nbsp; Equity: 1 000.00&nbsp; Free Margin: 1 000.00</div><div class="t" style="right:8.0px;top:492.2px;font-size:9.6px;line-height:11.5px;color:#111;font-weight:700;transform-origin:100% 50%;">0.00</div><div class="b" style="left:9.5px;top:506px;width:1066.5px;height:13.5px;background:#fff"></div><div class="b" style="left:1075.5px;top:470.6px;width:1px;height:49px;background:#c8c8c8"></div><div class="b" style="left:9.5px;top:519.2px;width:1066.5px;height:1.3px;background:#555"></div><div class="b" style="left:11.9px;top:519.5px;width:38.4px;height:16px;background:#fff;border:1px solid #444;border-top:none;box-sizing:border-box"></div><div class="t" style="left:19.3px;top:521.8px;font-size:9.6px;line-height:11.5px;color:#222;font-weight:400;transform:scaleX(0.950);transform-origin:0 50%;">Trade</div><div class="t" style="left:58.6px;top:521.8px;font-size:9.6px;line-height:11.5px;color:#9a9a9a;font-weight:400;transform:scaleX(0.950);transform-origin:0 50%;">Exposure</div><div class="t" style="left:112.6px;top:521.8px;font-size:9.6px;line-height:11.5px;color:#9a9a9a;font-weight:400;transform:scaleX(0.950);transform-origin:0 50%;">History</div><div class="t" style="left:158.3px;top:521.8px;font-size:9.6px;line-height:11.5px;color:#9a9a9a;font-weight:400;transform:scaleX(0.950);transform-origin:0 50%;">News</div><div class="t" style="left:197.0px;top:521.8px;font-size:9.6px;line-height:11.5px;color:#9a9a9a;font-weight:400;transform:scaleX(0.950);transform-origin:0 50%;">Mailbox</div><div class="t" style="left:252.8px;top:521.8px;font-size:9.6px;line-height:11.5px;color:#9a9a9a;font-weight:400;transform:scaleX(0.950);transform-origin:0 50%;">Calendar</div><div class="t" style="left:306.4px;top:521.8px;font-size:9.6px;line-height:11.5px;color:#9a9a9a;font-weight:400;transform:scaleX(0.950);transform-origin:0 50%;">Company</div><div class="t" style="left:363.3px;top:521.8px;font-size:9.6px;line-height:11.5px;color:#9a9a9a;font-weight:400;transform:scaleX(0.950);transform-origin:0 50%;">Market</div><div class="t" style="left:408.3px;top:521.8px;font-size:9.6px;line-height:11.5px;color:#9a9a9a;font-weight:400;transform:scaleX(0.950);transform-origin:0 50%;">Alerts</div><div class="t" style="left:448.0px;top:521.8px;font-size:9.6px;line-height:11.5px;color:#9a9a9a;font-weight:400;transform:scaleX(0.950);transform-origin:0 50%;">Signals</div><div class="t" style="left:493.3px;top:521.8px;font-size:9.6px;line-height:11.5px;color:#9a9a9a;font-weight:400;transform:scaleX(0.950);transform-origin:0 50%;">Articles</div><div class="t" style="left:545.3px;top:521.8px;font-size:9.6px;line-height:11.5px;color:#9a9a9a;font-weight:400;transform:scaleX(0.950);transform-origin:0 50%;">Code Base</div><div class="t" style="left:604.4px;top:521.8px;font-size:9.6px;line-height:11.5px;color:#9a9a9a;font-weight:400;transform:scaleX(0.950);transform-origin:0 50%;">VPS</div><div class="t" style="left:636.0px;top:521.8px;font-size:9.6px;line-height:11.5px;color:#9a9a9a;font-weight:400;transform:scaleX(0.950);transform-origin:0 50%;">Experts</div><div class="t" style="left:681.4px;top:521.8px;font-size:9.6px;line-height:11.5px;color:#9a9a9a;font-weight:400;transform:scaleX(0.950);transform-origin:0 50%;">Journal</div><div class="b" style="left:104.8px;top:522.5px;width:1px;height:11px;background:#8a8a8a"></div><div class="b" style="left:150.9px;top:522.5px;width:1px;height:11px;background:#8a8a8a"></div><div class="b" style="left:189.2px;top:522.5px;width:1px;height:11px;background:#8a8a8a"></div><div class="b" style="left:244.8px;top:522.5px;width:1px;height:11px;background:#8a8a8a"></div><div class="b" style="left:298.1px;top:522.5px;width:1px;height:11px;background:#8a8a8a"></div><div class="b" style="left:354.5px;top:522.5px;width:1px;height:11px;background:#8a8a8a"></div><div class="b" style="left:400.0px;top:522.5px;width:1px;height:11px;background:#8a8a8a"></div><div class="b" style="left:439.5px;top:522.5px;width:1px;height:11px;background:#8a8a8a"></div><div class="b" style="left:485.0px;top:522.5px;width:1px;height:11px;background:#8a8a8a"></div><div class="b" style="left:537.3px;top:522.5px;width:1px;height:11px;background:#8a8a8a"></div><div class="b" style="left:596.7px;top:522.5px;width:1px;height:11px;background:#8a8a8a"></div><div class="b" style="left:628.1px;top:522.5px;width:1px;height:11px;background:#8a8a8a"></div><div class="b" style="left:673.9px;top:522.5px;width:1px;height:11px;background:#8a8a8a"></div><div class="t" style="left:232.5px;top:525.5px;font-size:7.5px;line-height:9.0px;color:#e02020;font-weight:700;transform-origin:0 50%;">7</div><div class="t" style="left:525.5px;top:525.5px;font-size:7.5px;line-height:9.0px;color:#e02020;font-weight:700;transform-origin:0 50%;">1</div><div class="t" style="left:1004.4px;top:522.5px;font-size:9.6px;line-height:11.5px;color:#222;font-weight:400;transform:scaleX(0.929);transform-origin:0 50%;">Strategy Tester</div><div class="b" style="left:0px;top:539.6px;width:1080px;height:17.4px;background:#f0f0f0"></div><div class="b" style="left:0px;top:539.6px;width:1080px;height:1px;background:#dcdcdc"></div><div class="t" style="left:0.0px;top:544.0px;font-size:9.6px;line-height:11.5px;color:#222;font-weight:400;transform:scaleX(0.943);transform-origin:0 50%;">Chart properties, F8</div><div class="b" style="left:530.9px;top:542px;width:1px;height:15px;background:#c4c4c4"></div><div class="b" style="left:632.3px;top:542px;width:1px;height:15px;background:#c4c4c4"></div><div class="b" style="left:710.1px;top:542px;width:1px;height:15px;background:#c4c4c4"></div><div class="b" style="left:766.4px;top:542px;width:1px;height:15px;background:#c4c4c4"></div><div class="b" style="left:822.7px;top:542px;width:1px;height:15px;background:#c4c4c4"></div><div class="b" style="left:875.5px;top:542px;width:1px;height:15px;background:#c4c4c4"></div><div class="b" style="left:931.7px;top:542px;width:1px;height:15px;background:#c4c4c4"></div><div class="b" style="left:984.5px;top:542px;width:1px;height:15px;background:#c4c4c4"></div><div class="t" style="left:536.4px;top:544.0px;font-size:9.6px;line-height:11.5px;color:#222;font-weight:400;transform:scaleX(0.950);transform-origin:0 50%;">Default</div><svg class="b" style="left:988px;top:543px" width="14" height="12"><path d="M1 11 L12 11 L12 1 Z" fill="#cfcfcf"/><path d="M1 11 L9 11 L9 4.2 Z" fill="#2aa83a"/></svg><div class="t" style="left:1004.4px;top:544.0px;font-size:9.6px;line-height:11.5px;color:#222;font-weight:400;transform:scaleX(0.941);transform-origin:0 50%;">245.82 ms</div><div class="b" style="left:124px;top:15px;width:160.5px;height:361px;background:#f0f0f0;border:1px solid #cfcfcf;border-right-color:#9a9a9a;border-bottom-color:#b0b0b0;box-sizing:border-box;box-shadow:1.5px 1.5px 2px rgba(0,0,0,0.35)"></div><svg class="b" style="left:0;top:0" width="290" height="380"><rect x="129" y="90.0" width="151" height="1" fill="#cdcdcd"/><rect x="129" y="149.2" width="151" height="1" fill="#cdcdcd"/><rect x="129" y="191.0" width="151" height="1" fill="#cdcdcd"/><rect x="129" y="250.5" width="151" height="1" fill="#cdcdcd"/><rect x="129" y="292.3" width="151" height="1" fill="#cdcdcd"/><rect x="129" y="351.9" width="151" height="1" fill="#cdcdcd"/><rect x="126.3" y="357" width="156" height="16.3" fill="#1b74d3"/><rect x="130" y="20.5" width="13" height="10.5" fill="#dbe8f6" stroke="#4a8ad8" stroke-width="1.2"/><rect x="130" y="20.5" width="13" height="2.4" fill="#4a8ad8"/><rect x="131.8" y="23.9" width="1.5" height="6" fill="#e8806a"/><rect x="134.5" y="23.9" width="1.5" height="6" fill="#e8806a"/><rect x="137.2" y="23.9" width="1.5" height="6" fill="#e8806a"/><rect x="139.9" y="23.9" width="1.5" height="6" fill="#e8806a"/><rect x="130.5" y="37.5" width="9" height="9.5" fill="#f2f2f2" stroke="#a8a8a8" stroke-width="0.9"/><path d="M132 40.0 H138 M132 42.0 H136 M132 44.0 H136" stroke="#b8b8b8" stroke-width="0.8"/><rect x="135.5" y="41.0" width="7" height="8.5" fill="#e0e0e0" stroke="#9a9a9a" stroke-width="0.9"/><path d="M137.5 48.0 L141 42.5" stroke="#555" stroke-width="1.2"/><path d="M273.5 57.7 L277 60.9 L273.5 64.1 Z" fill="#222"/><rect x="130.5" y="72.5" width="10" height="8.5" fill="#f2f2f2" stroke="#a8a8a8" stroke-width="0.9"/><path d="M132 75.0 H139 M132 77.0 H136" stroke="#b8b8b8" stroke-width="0.8"/><circle cx="139" cy="81.0" r="3.2" fill="#9a9a9a" stroke="#666" stroke-width="0.9"/><circle cx="139" cy="81.0" r="1.1" fill="#eee"/><path d="M131.5 97.5 V107.2 H142.0" stroke="#2a5ab0" stroke-width="1.2" fill="none"/><circle cx="131.5" cy="97.5" r="1.1" fill="#2a5ab0"/><circle cx="142.0" cy="107.2" r="1.1" fill="#2a5ab0"/><circle cx="131.5" cy="107.2" r="1.1" fill="#2a5ab0"/><path d="M135.5 98.7 V105.7 M138.5 96.7 V103.7 M137 98.7 H140" stroke="#2a9a2a" stroke-width="1.5" fill="none"/><rect x="127.8" y="112.0" width="16" height="15.8" fill="#dbe6f2" stroke="#b6c8dc" stroke-width="0.8"/><path d="M131.5 115.1 V124.8 H142.0" stroke="#2a5ab0" stroke-width="1.2" fill="none"/><circle cx="131.5" cy="115.1" r="1.1" fill="#2a5ab0"/><circle cx="142.0" cy="124.8" r="1.1" fill="#2a5ab0"/><circle cx="131.5" cy="124.8" r="1.1" fill="#2a5ab0"/><rect x="135" y="116.3" width="3.2" height="7" fill="none" stroke="#2a9a2a" stroke-width="1.2"/><path d="M131.5 132.7 V142.4 H142.0" stroke="#2a5ab0" stroke-width="1.2" fill="none"/><circle cx="131.5" cy="132.7" r="1.1" fill="#2a5ab0"/><circle cx="142.0" cy="142.4" r="1.1" fill="#2a5ab0"/><circle cx="131.5" cy="142.4" r="1.1" fill="#2a5ab0"/><path d="M134 139.9 L136.5 135.9 L139 137.9 L142 133.9" stroke="#2a9a2a" stroke-width="1.5" fill="none"/><path d="M273.5 158.8 L277 162.0 L273.5 165.2 Z" fill="#222"/><path d="M273.5 176.8 L277 180.0 L273.5 183.2 Z" fill="#222"/><path d="M131.5 199.0 V208.7 H142.0" stroke="#2a5ab0" stroke-width="1.2" fill="none"/><circle cx="131.5" cy="199.0" r="1.1" fill="#2a5ab0"/><circle cx="142.0" cy="208.7" r="1.1" fill="#2a5ab0"/><circle cx="131.5" cy="208.7" r="1.1" fill="#2a5ab0"/><path d="M133.5 199.2 V207.2" stroke="#5070b0" stroke-width="0.7"/><path d="M135.3 199.2 V207.2" stroke="#5070b0" stroke-width="0.7"/><path d="M137.1 199.2 V207.2" stroke="#5070b0" stroke-width="0.7"/><path d="M138.9 199.2 V207.2" stroke="#5070b0" stroke-width="0.7"/><path d="M140.7 199.2 V207.2" stroke="#5070b0" stroke-width="0.7"/><rect x="127.8" y="213.3" width="16" height="15.8" fill="#dbe6f2" stroke="#b6c8dc" stroke-width="0.8"/><path d="M131.5 216.4 V226.1 H142.0" stroke="#2a5ab0" stroke-width="1.2" fill="none"/><circle cx="131.5" cy="216.4" r="1.1" fill="#2a5ab0"/><circle cx="142.0" cy="226.1" r="1.1" fill="#2a5ab0"/><circle cx="131.5" cy="226.1" r="1.1" fill="#2a5ab0"/><path d="M141 216.6 V224.6" stroke="#2a5ab0" stroke-width="0.9"/><path d="M134.5 220.6 H140 M137.5 218.6 L140 220.6 L137.5 222.6" stroke="#2aaa2a" stroke-width="1.4" fill="none"/><rect x="127.8" y="230.8" width="16" height="15.8" fill="#dbe6f2" stroke="#b6c8dc" stroke-width="0.8"/><path d="M131.5 233.9 V243.6 H142.0" stroke="#2a5ab0" stroke-width="1.2" fill="none"/><circle cx="131.5" cy="233.9" r="1.1" fill="#2a5ab0"/><circle cx="142.0" cy="243.6" r="1.1" fill="#2a5ab0"/><circle cx="131.5" cy="243.6" r="1.1" fill="#2a5ab0"/><path d="M134.5 234.1 V242.1" stroke="#2a5ab0" stroke-width="0.9"/><path d="M136 238.1 L139.5 235.1 V241.1 Z M139 238.1 H142" stroke="#3a80d0" fill="#3a80d0" stroke-width="1.1"/><path d="M131.5 258.3 V268.0 H142.0" stroke="#2a5ab0" stroke-width="1.2" fill="none"/><circle cx="131.5" cy="258.3" r="1.1" fill="#2a5ab0"/><circle cx="142.0" cy="268.0" r="1.1" fill="#2a5ab0"/><circle cx="131.5" cy="268.0" r="1.1" fill="#2a5ab0"/><path d="M133.5 267.0 L135.5 263.5 L137.5 265.0 L140 262.5 L141 267.0 Z" fill="#2a9a2a"/><path d="M133.5 262.0 Q137 257.5 140.5 260.5" stroke="#7aaa7a" stroke-width="0.8" fill="none"/><path d="M131.5 275.8 V285.5 H142.0" stroke="#2a5ab0" stroke-width="1.2" fill="none"/><circle cx="131.5" cy="275.8" r="1.1" fill="#2a5ab0"/><circle cx="142.0" cy="285.5" r="1.1" fill="#2a5ab0"/><circle cx="131.5" cy="285.5" r="1.1" fill="#2a5ab0"/><path d="M133.5 284.5 L135.5 281.0 L137.5 282.5 L140 280.0 L141 284.5 Z" fill="#2a9a2a"/><path d="M137 276.0 H142 M139.5 276.0 V282.0" stroke="#2a5ab0" stroke-width="1.2"/><circle cx="134.5" cy="303.5" r="3.8" fill="#e6f0fa" stroke="#2a6ac0" stroke-width="1.4"/><path d="M137.3 306.5 L141 310.5" stroke="#a07a20" stroke-width="2.2"/><path d="M132.5 303.5 H136.5" stroke="#2a6ac0" stroke-width="1.1"/><path d="M134.5 301.5 V305.5" stroke="#2a6ac0" stroke-width="1.1"/><circle cx="134.5" cy="321.0" r="3.8" fill="#e6f0fa" stroke="#2a6ac0" stroke-width="1.4"/><path d="M137.3 324.0 L141 328.0" stroke="#a07a20" stroke-width="2.2"/><path d="M132.5 321.0 H136.5" stroke="#2a6ac0" stroke-width="1.1"/><path d="M131.5 335.4 V345.1 H142.0" stroke="#2a5ab0" stroke-width="1.2" fill="none"/><circle cx="131.5" cy="335.4" r="1.1" fill="#2a5ab0"/><circle cx="142.0" cy="345.1" r="1.1" fill="#2a5ab0"/><circle cx="131.5" cy="345.1" r="1.1" fill="#2a5ab0"/><path d="M134.5 336.1 L138 339.6" stroke="#5a8ad0" stroke-width="1.4"/><path d="M138 338.6 L141 341.1 L138 343.1 Z" fill="#2aaa2a"/><rect x="129.5" y="358.5" width="13" height="11" fill="#eaf2fa" stroke="#fff" stroke-width="0.8"/><path d="M131 366.0 L134 362.0 L137 364.0 L141 360.0" stroke="#2a9a2a" stroke-width="1.1" fill="none"/><circle cx="139" cy="367.8" r="4.2" fill="#f0c020" stroke="#c09010" stroke-width="0.8"/></svg><div class="t" style="left:148.6px;top:19.9px;font-size:9.6px;line-height:11.5px;color:#222;font-weight:400;transform:scaleX(0.970);transform-origin:0 50%;">Depth Of Market</div><div class="t" style="right:800.5px;top:19.9px;font-size:9.6px;line-height:11.5px;color:#222;font-weight:400;transform:scaleX(0.970);transform-origin:100% 50%;">Alt+B</div><div class="t" style="left:148.6px;top:37.7px;font-size:9.6px;line-height:11.5px;color:#a8a8a8;font-weight:400;transform:scaleX(0.970);transform-origin:0 50%;">Indicator List</div><div class="t" style="right:800.5px;top:37.7px;font-size:9.6px;line-height:11.5px;color:#a8a8a8;font-weight:400;transform:scaleX(0.970);transform-origin:100% 50%;">Ctrl+I</div><div class="t" style="left:148.6px;top:55.1px;font-size:9.6px;line-height:11.5px;color:#222;font-weight:400;transform:scaleX(0.970);transform-origin:0 50%;">Objects</div><div class="t" style="left:148.6px;top:72.7px;font-size:9.6px;line-height:11.5px;color:#a8a8a8;font-weight:400;transform:scaleX(0.970);transform-origin:0 50%;">Expert List</div><div class="t" style="left:148.6px;top:96.9px;font-size:9.6px;line-height:11.5px;color:#222;font-weight:400;transform:scaleX(0.970);transform-origin:0 50%;">Bar Chart</div><div class="t" style="right:800.5px;top:96.9px;font-size:9.6px;line-height:11.5px;color:#222;font-weight:400;transform:scaleX(0.970);transform-origin:100% 50%;">Alt+<u>1</u></div><div class="t" style="left:148.6px;top:114.5px;font-size:9.6px;line-height:11.5px;color:#222;font-weight:400;transform:scaleX(0.970);transform-origin:0 50%;">Candlesticks</div><div class="t" style="right:800.5px;top:114.5px;font-size:9.6px;line-height:11.5px;color:#222;font-weight:400;transform:scaleX(0.970);transform-origin:100% 50%;">Alt+<u>2</u></div><div class="t" style="left:148.6px;top:132.1px;font-size:9.6px;line-height:11.5px;color:#222;font-weight:400;transform:scaleX(0.970);transform-origin:0 50%;">Line Chart</div><div class="t" style="right:800.5px;top:132.1px;font-size:9.6px;line-height:11.5px;color:#222;font-weight:400;transform:scaleX(0.970);transform-origin:100% 50%;">Alt+<u>3</u></div><div class="t" style="left:148.6px;top:156.2px;font-size:9.6px;line-height:11.5px;color:#222;font-weight:400;transform:scaleX(0.970);transform-origin:0 50%;">Timeframes</div><div class="t" style="left:148.6px;top:174.2px;font-size:9.6px;line-height:11.5px;color:#222;font-weight:400;transform:scaleX(0.970);transform-origin:0 50%;">Templates</div><div class="t" style="left:148.6px;top:198.4px;font-size:9.6px;line-height:11.5px;color:#222;font-weight:400;transform:scaleX(0.970);transform-origin:0 50%;">Grid</div><div class="t" style="right:800.5px;top:198.4px;font-size:9.6px;line-height:11.5px;color:#222;font-weight:400;transform:scaleX(0.970);transform-origin:100% 50%;">Ctrl+G</div><div class="t" style="left:148.6px;top:215.8px;font-size:9.6px;line-height:11.5px;color:#222;font-weight:400;transform:scaleX(0.970);transform-origin:0 50%;">Auto Scroll</div><div class="t" style="left:148.6px;top:233.3px;font-size:9.6px;line-height:11.5px;color:#222;font-weight:400;transform:scaleX(0.970);transform-origin:0 50%;">Chart Shift</div><div class="t" style="left:148.6px;top:257.7px;font-size:9.6px;line-height:11.5px;color:#222;font-weight:400;transform:scaleX(0.970);transform-origin:0 50%;">Volumes</div><div class="t" style="right:800.5px;top:257.7px;font-size:9.6px;line-height:11.5px;color:#222;font-weight:400;transform:scaleX(0.970);transform-origin:100% 50%;">Ctrl+K</div><div class="t" style="left:148.6px;top:275.2px;font-size:9.6px;line-height:11.5px;color:#222;font-weight:400;transform:scaleX(0.970);transform-origin:0 50%;">Tick Volumes</div><div class="t" style="right:800.5px;top:275.2px;font-size:9.6px;line-height:11.5px;color:#222;font-weight:400;transform:scaleX(0.970);transform-origin:100% 50%;">Ctrl+L</div><div class="t" style="left:148.6px;top:299.7px;font-size:9.6px;line-height:11.5px;color:#222;font-weight:400;transform:scaleX(0.970);transform-origin:0 50%;">Zoom In</div><div class="t" style="right:800.5px;top:299.7px;font-size:9.6px;line-height:11.5px;color:#222;font-weight:400;transform:scaleX(0.970);transform-origin:100% 50%;">+</div><div class="t" style="left:148.6px;top:317.2px;font-size:9.6px;line-height:11.5px;color:#222;font-weight:400;transform:scaleX(0.970);transform-origin:0 50%;">Zoom Out</div><div class="t" style="right:800.5px;top:317.2px;font-size:9.6px;line-height:11.5px;color:#222;font-weight:400;transform:scaleX(0.970);transform-origin:100% 50%;">-</div><div class="t" style="left:148.6px;top:334.8px;font-size:9.6px;line-height:11.5px;color:#222;font-weight:400;transform:scaleX(0.970);transform-origin:0 50%;">Step by Step</div><div class="t" style="right:800.5px;top:334.8px;font-size:9.6px;line-height:11.5px;color:#222;font-weight:400;transform:scaleX(0.970);transform-origin:100% 50%;">F12</div><div class="t" style="left:148.6px;top:359.2px;font-size:9.6px;line-height:11.5px;color:#fff;font-weight:400;transform:scaleX(0.970);transform-origin:0 50%;">Properties</div><div class="t" style="right:800.5px;top:359.2px;font-size:9.6px;line-height:11.5px;color:#fff;font-weight:400;transform:scaleX(0.970);transform-origin:100% 50%;">F8</div>
</body></html>
